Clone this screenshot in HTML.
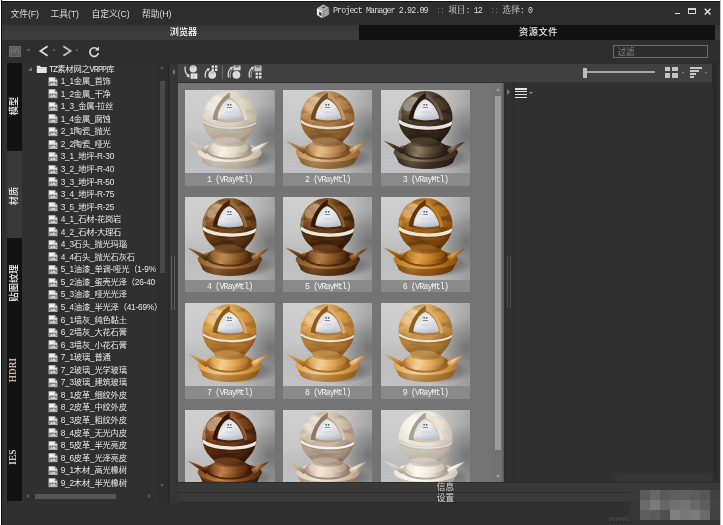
<!DOCTYPE html>
<html lang="zh-CN"><head><meta charset="utf-8"><title>Project Manager</title>
<style>
*{margin:0;padding:0;box-sizing:border-box}
html,body{width:723px;height:525px;overflow:hidden;background:#fff}
body{font-family:"Liberation Sans","Noto Sans CJK SC",sans-serif;color:#e6e6e6;position:relative}
#win{position:absolute;left:0;top:0;width:723px;height:525px;background:#303030;overflow:hidden;will-change:transform;opacity:.999}
#win:before{content:"";position:absolute;left:0;top:0;width:723px;height:1.5px;background:linear-gradient(#fff 0,#fff 1px,#111 1px);z-index:50}
#win:after{content:"";position:absolute;left:0;top:0;width:1.5px;height:525px;background:linear-gradient(90deg,#fff 0,#fff 1px,#111 1px);z-index:50}
#title{position:absolute;left:0;top:0;width:720.5px;height:24.8px;background:#2d2d2d}
.menu{position:absolute;top:8.2px;font-size:8.8px;line-height:13px;color:#dadada;white-space:nowrap;letter-spacing:-0.1px}
#logo{position:absolute;left:316px;top:4px;width:14px;height:15px}
#ttext{position:absolute;left:333px;top:5px;height:13px;line-height:13px;font-family:"Liberation Mono","Noto Serif CJK SC",monospace;font-size:8.4px;letter-spacing:-0.91px;color:#dcdcdc;white-space:pre}
#ttext .dim{color:#777}
#ttext .cj{font-size:8.6px;letter-spacing:0}
#wmin{position:absolute;left:674.8px;top:12.7px;width:5.7px;height:1.7px;background:#ddd}
#wmax{position:absolute;left:688.4px;top:7.7px;width:7.8px;height:6.7px;border:1.4px solid #d6d6d6;border-top-width:2px}
#wclose{position:absolute;left:703.5px;top:7.5px;width:7.2px;height:7.2px}
#tabs{position:absolute;left:0;top:24.8px;width:720.5px;height:15px;background:linear-gradient(#373737 0,#383838 40%,#3c3c3c 45%,#3c3c3c 100%)}
#tab1{position:absolute;left:0;top:0;width:359px;height:14.9px;text-align:center;font-size:9.2px;line-height:14.4px;color:#fff;font-weight:500;padding-left:8px}
#tab2{position:absolute;left:359px;top:0;width:356px;height:14.9px;background:#121212;text-align:center;font-size:9.2px;line-height:14.4px;color:#e8e8e8;font-weight:500;padding-left:3px;letter-spacing:0.6px}
#nav{position:absolute;left:0;top:39.8px;width:720.5px;height:24px;background:#2e2e2e}
#navico{position:absolute;left:9.2px;top:6.6px;width:12.2px;height:11px;background:#5a5a5a;border:1px solid #6a6a6a}
.dd{position:absolute;width:2.6px;height:1.2px;background:#585858}
.chev{position:absolute;top:5.3px;width:12px;height:12px}
#refresh{position:absolute;left:88.4px;top:6.6px;width:12px;height:12px}
#filter{position:absolute;left:613.4px;top:5.5px;width:94.6px;height:12.6px;border:1px solid #6c6c6c;background:#2c2c2c}
#filter span{position:absolute;left:3px;top:-0.6px;font-size:8.6px;line-height:12px;color:#8184a0}
#side{position:absolute;left:6.6px;top:63px;width:15.5px;height:437.5px;background:#111}
.vt{position:absolute;left:0;width:15.5px;height:87.5px;background:#121212}
.vt.act{background:#393939}
.vt span{position:absolute;left:7px;top:44.3px;transform:translate(-50%,-50%) rotate(-90deg);white-space:nowrap;font-size:9.2px;font-weight:700;color:#d6d6d6;line-height:12px}
.vt span.lat{font-family:"Liberation Serif",serif;font-size:9.3px;letter-spacing:0.1px;left:6.8px}
.vt span.pk{color:#cfb2a8}
#tree{position:absolute;left:22.1px;top:63px;width:147.4px;height:440.2px;background:#303030;overflow:hidden;border-right:1px solid #262626}
#tree .root{position:absolute;left:0;top:0.4px;height:13px}
.exp{position:absolute;left:6.2px;top:3.4px;width:0;height:0;border-left:4px solid transparent;border-bottom:4px solid #777}
.fold{position:absolute;left:14.4px;top:1.4px;width:11.6px;height:8.6px}
.rt{position:absolute;left:26.8px;top:-0.8px;font-size:8.3px;line-height:13px;white-space:nowrap;color:#e8e8e8;letter-spacing:-0.22px}
.ti{position:absolute;left:25.8px;height:12.4px;white-space:nowrap}
.ti .fi{position:absolute;left:0;top:1.4px;width:10px;height:9.6px}
.ti span{position:absolute;left:12.8px;top:-0.3px;font-size:8.3px;line-height:12.4px;color:#e8e8e8;letter-spacing:-0.22px}
#vsb{position:absolute;left:135.4px;top:0;width:12px;height:440px;background:#2e2e2e}
#vsb b{position:absolute;left:2.5px;top:18px;width:5px;height:192px;background:#4a4a4a}
i.up,i.dn,i.lf,i.rt2{position:absolute;width:0;height:0}
#vsb .up{left:2.6px;top:3.4px;border-left:2.5px solid transparent;border-right:2.5px solid transparent;border-bottom:3.2px solid #5c5c5c}
#vsb .dn{left:2.6px;top:420.8px;border-left:2.5px solid transparent;border-right:2.5px solid transparent;border-top:3.2px solid #5c5c5c}
#hsb{position:absolute;left:0;top:430px;width:136px;height:7px}
#hsb b{position:absolute;left:12.8px;top:0.6px;width:81.4px;height:5.6px;background:#555}
#hsb .lf{left:4.4px;top:1px;border-top:2.5px solid transparent;border-bottom:2.5px solid transparent;border-right:3.2px solid #5c5c5c}
#hsb .rt2{left:126px;top:1px;border-top:2.5px solid transparent;border-bottom:2.5px solid transparent;border-left:3.2px solid #5c5c5c}
#split1{position:absolute;left:169.5px;top:63.5px;width:8.3px;height:439.7px;background:#353535}
#split1 i{position:absolute;left:2px;top:5.5px;width:0;height:0;border-top:3px solid transparent;border-bottom:3px solid transparent;border-right:3.4px solid #777}
#tbar{position:absolute;left:177.8px;top:63.8px;width:534.4px;height:18.8px;background:#414141}
#tb1,#tb2,#tb3,#tb4{position:absolute;top:1.5px;width:14px;height:14px}
#tb1{left:6px}#tb2{left:26.2px}#tb3{left:49.5px}#tb4{left:70.5px}
.tsep{position:absolute;left:44.4px;top:2px;width:1px;height:13.5px;background:#686868}
#slider{position:absolute;left:405.7px;top:3.9px;width:72px;height:10px}
#slider b{position:absolute;left:0;top:0;width:3.8px;height:10px;background:#bdbdbd}
#slider i{position:absolute;left:3.8px;top:3.6px;width:68px;height:2.2px;background:#a8a8a8}
#gridico{position:absolute;left:487.3px;top:2.8px;width:12.6px;height:11.4px}
#gridico i{position:absolute;width:5.4px;height:4.9px;background:#c4c4c4}
#gridico i:nth-child(2){left:7.2px}#gridico i:nth-child(3){top:6.5px}#gridico i:nth-child(4){left:7.2px;top:6.5px}
.dd2{position:absolute;top:8px;width:0;height:0;border-left:1.8px solid transparent;border-right:1.8px solid transparent;border-top:2.2px solid #8a8a8a}
#sortico{position:absolute;left:512.1px;top:3.2px;width:12px;height:11px}
#sortico i{display:block;height:1.7px;background:#c8c8c8;margin-bottom:1.3px}
#thumbs{position:absolute;left:177.8px;top:82.3px;width:326.7px;height:399.7px;background:#747474;overflow:hidden;border-top:1px solid #303030}
.th{position:absolute;width:89.6px;height:95.6px;background:#8a8a8a;overflow:hidden}
.th svg{position:absolute;left:0;top:0;width:89.6px;height:83px;display:block}
.th .lb{position:absolute;left:0;top:83px;width:89.6px;height:12.6px;text-align:center;font-family:"Liberation Mono","Noto Serif CJK SC",monospace;font-size:8.3px;line-height:13.4px;letter-spacing:-0.85px;color:#f4f4f4;white-space:pre}
#tsb{position:absolute;left:314.2px;top:0;width:12.5px;height:400px;background:linear-gradient(90deg,#727272 0,#727272 78%,#555 100%)}
#tsb b{position:absolute;left:3.4px;top:12.6px;width:5.9px;height:354.5px;background:#9c9c9c}
#tsb .up{left:3.8px;top:4.5px;border-left:2.6px solid transparent;border-right:2.6px solid transparent;border-bottom:3.4px solid #9a9a9a}
#tsb .dn{left:3.8px;top:391.6px;border-left:2.6px solid transparent;border-right:2.6px solid transparent;border-top:3.4px solid #a4a4a4}
#split2{position:absolute;left:504.5px;top:82.3px;width:9.5px;height:399.7px;background:#303030;border-left:1.6px solid #2a2a2a;border-right:1px solid #292929}
#split2 i{position:absolute;left:1.6px;top:7.2px;width:0;height:0;border-top:3px solid transparent;border-bottom:3px solid transparent;border-left:3.4px solid #7a7a7a}
#right{position:absolute;left:514px;top:82.3px;width:202.6px;height:399.7px;background:#303030;border-right:4.4px solid #2a2a2a}
#ham{position:absolute;left:1.4px;top:5.6px;width:11.6px}
#ham i{display:block;height:1.7px;background:#e2e2e2;margin-bottom:1.2px}
.dd3{position:absolute;left:14.8px;top:10px;width:0;height:0;border-left:2.2px solid transparent;border-right:2.2px solid transparent;border-top:2.6px solid #8a8a8a}
.bar{position:absolute;left:177.5px;width:543px;height:10.2px;background:#393939;border-top:1px solid #2c2c2c}
#info{top:482px}
#sett{top:492.1px;border-bottom:1px solid #2a2a2a;height:10.8px}
.bar span{position:absolute;left:259.3px;top:-1.6px;font-size:8.6px;line-height:12px;color:#d8d8d8}
#mosaic i{position:absolute;width:10px;height:10px}
#halo{position:absolute;left:630px;top:486px;width:90px;height:37px;background:#3a3a3a;filter:blur(3px);opacity:.8}
#www{position:absolute;left:609px;top:513.5px;font-size:8px;color:#464646;font-weight:700;letter-spacing:0.2px}
#rstrip{position:absolute;left:720px;top:0;width:3px;height:525px;background:linear-gradient(90deg,#8a8a8a 0,#e8e8e8 0.8px,#fff 1.4px);z-index:60}

.rt .mn{font-family:"Liberation Mono",monospace;letter-spacing:-0.85px;font-size:8.4px}

.grip{position:absolute;top:256px;width:4.2px;height:54px;border-left:1px solid #5c5c5c;border-right:1px solid #5c5c5c}

#rband{position:absolute;left:712.2px;top:62px;width:4.4px;height:21px;background:#2a2a2a}
#smudge{position:absolute;left:614px;top:474px;width:100px;height:7px;background:#3e3e3e;opacity:.55;filter:blur(2px)}

</style></head><body>
<svg width="0" height="0" style="position:absolute">
<defs>
<linearGradient id="bgv" x1="0" y1="0" x2="0" y2="1"><stop offset="0" stop-color="#d0d0d0"/><stop offset="0.45" stop-color="#c8c8c8"/><stop offset="0.62" stop-color="#bebebe"/><stop offset="1" stop-color="#c2c2c4"/></linearGradient>
<linearGradient id="bgr" x1="0" y1="0" x2="1" y2="0"><stop offset="0" stop-color="#000" stop-opacity="0"/><stop offset="0.55" stop-color="#000" stop-opacity="0"/><stop offset="1" stop-color="#000" stop-opacity=".2"/></linearGradient>
<radialGradient id="shR" cx="0.5" cy="0.5" r="0.5"><stop offset="0" stop-color="#505050" stop-opacity=".75"/><stop offset="0.6" stop-color="#606060" stop-opacity=".4"/><stop offset="1" stop-color="#707070" stop-opacity="0"/></radialGradient>
<radialGradient id="shF" cx="0.5" cy="0.5" r="0.5"><stop offset="0" stop-color="#303030" stop-opacity=".7"/><stop offset="0.7" stop-color="#505050" stop-opacity=".35"/><stop offset="1" stop-color="#707070" stop-opacity="0"/></radialGradient>
<linearGradient id="dome" x1="0" y1="0" x2="1" y2="1"><stop offset="0" stop-color="#c4c8d0"/><stop offset="0.42" stop-color="#ececee"/><stop offset="1" stop-color="#b8c0cc"/></linearGradient>
<linearGradient id="domev" x1="0" y1="0" x2="0" y2="1"><stop offset="0" stop-color="#fff" stop-opacity=".25"/><stop offset="0.55" stop-color="#fff" stop-opacity="0"/><stop offset="1" stop-color="#8a98ac" stop-opacity=".45"/></linearGradient>
<pattern id="chk" width="7" height="4" patternUnits="userSpaceOnUse" patternTransform="skewX(-55)"><rect width="7" height="4" fill="none"/><path d="M0 0H7M0 0V4" stroke="#8e96a4" stroke-width=".4" opacity=".3"/></pattern>
<filter id="wood" x="0" y="0" width="1" height="1"><feTurbulence type="fractalNoise" baseFrequency="0.06 0.16" numOctaves="3" seed="7"/><feColorMatrix type="matrix" values="0 0 0 0 0  0 0 0 0 0  0 0 0 0 0  1.8 0 0 0 -0.7"/></filter>
<g id="bgfloor"><rect width="89.6" height="83" fill="url(#bgv)"/><rect y="44" width="89.6" height="39" fill="url(#chk)"/><rect width="89.6" height="83" fill="url(#bgr)"/><ellipse cx="85" cy="44" rx="27" ry="31" fill="url(#shR)" opacity=".72"/><ellipse cx="56" cy="68.5" rx="37" ry="12" fill="url(#shF)"/></g>
<symbol id="fileico" viewBox="0 0 10 10">
<path d="M0.3 0.3H7L9.7 3V9.7H0.3Z" fill="#d6d6d6"/>
<path d="M7 0.3V3H9.7Z" fill="#888"/>
<rect x="1.2" y="1.4" width="4.5" height="2.6" fill="#f4f4f4"/>
<rect x="1.2" y="5" width="7.6" height="3.8" fill="#777"/>
<path d="M1.8 8.2L3.4 6L4.6 7.4L6 5.6L8.2 8.2Z" fill="#e8e8e8"/>
</symbol>
</defs>
</svg>
<div id="win">
 <div id="title">
  <div class="menu" style="left:10.6px">文件(F)</div>
  <div class="menu" style="left:50.6px">工具(T)</div>
  <div class="menu" style="left:91.5px">自定义(C)</div>
  <div class="menu" style="left:142px">帮助(H)</div>
  <svg id="logo" viewBox="0 0 14 15"><polygon points="7.3,0.6 13.2,3.8 6.8,7.4 0.9,4.2" fill="#b4b4b4"/><polygon points="0.9,4.2 6.8,7.4 6.4,14.3 0.9,11.1" fill="#ededed"/><polygon points="6.8,7.4 13.2,3.8 13.2,10.6 6.4,14.3" fill="#8e8e8e"/><polygon points="3.2,7.6 5.6,8.9 5.5,12.2 3.2,10.9" fill="#383838"/><polygon points="5.4,3.5 8,2.3 10,3.4 7.5,4.7" fill="#5a5a5a"/><path d="M8.2 8.2L12.2 6M8.2 10.2L12.2 8M8.2 12.2L12.2 10" stroke="#c4c4c4" stroke-width=".7"/></svg>
  <div id="ttext">Project Manager 2.92.09<span class="dim">  :: </span><span class="cj">项目</span>: 12<span class="dim">  :: </span><span class="cj">选择</span>: 0</div>
  <div id="wmin"></div><div id="wmax"></div>
  <svg id="wclose" viewBox="0 0 8 8"><path d="M0.8 0.8L7.2 7.2M7.2 0.8L0.8 7.2" stroke="#e8e8e8" stroke-width="1.5" fill="none"/></svg>
 </div>
 <div id="tabs">
  <div id="tab1">浏览器</div>
  <div id="tab2">资源文件</div>
 </div>
 <div id="nav">
  <div id="navico"><svg viewBox="0 0 10 9" style="position:absolute;left:1.2px;top:0.8px;width:8px;height:7.4px"><path d="M1 8V1L5 6V1H9V8" stroke="#7c7c7c" stroke-width="1.2" fill="none"/></svg></div>
  <span class="dd" style="left:27px;top:9.6px"></span>
  <svg class="chev" style="left:37.5px" viewBox="0 0 10 10"><path d="M8 1L2 5L8 9" stroke="#dcdcdc" stroke-width="1.5" fill="none"/></svg>
  <span class="dd" style="left:52.8px;top:9.6px"></span>
  <svg class="chev" style="left:61px" viewBox="0 0 10 10"><path d="M2 1L8 5L2 9" stroke="#c2c2c2" stroke-width="1.5" fill="none"/></svg>
  <span class="dd" style="left:75.6px;top:9.6px"></span>
  <svg id="refresh" viewBox="0 0 12 12"><path d="M9.6 3.4A4.3 4.3 0 1 0 10.4 7" stroke="#d8d8d8" stroke-width="1.7" fill="none"/><path d="M11 0.6V4.6H7Z" fill="#d8d8d8"/></svg>
  <div id="filter"><span>过滤</span></div>
 </div>
 <div id="side">
  <div class="vt" style="top:0"><span style="top:43.2px">模型</span></div>
  <div class="vt act" style="top:87.5px"><span style="top:45.2px">材质</span></div>
  <div class="vt" style="top:175px"><span style="top:44.5px">贴图纹理</span></div>
  <div class="vt" style="top:262.5px"><span class="lat pk" style="top:44.6px">HDRI</span></div>
  <div class="vt" style="top:350px"><span class="lat" style="top:43.8px">IES</span></div>
 </div>
 <div id="tree">
  <div class="root"><span class="exp"></span><svg class="fold" viewBox="0 0 11 9"><path d="M0.3 8.7V0.9H3.6L4.6 2H10.7V8.7Z" fill="#e6e6e6"/><path d="M0.3 3.4H10.7" stroke="#bbb" stroke-width="0.6"/></svg><span class="rt"><span class="mn">TZ</span>素材网之<span class="mn">VRPP</span>库</span></div>
<div class="ti" style="top:12.40px"><svg class="fi" viewBox="0 0 10 10"><use href="#fileico"/></svg><span>1_1金属_首饰</span></div>
<div class="ti" style="top:24.95px"><svg class="fi" viewBox="0 0 10 10"><use href="#fileico"/></svg><span>1_2金属_干净</span></div>
<div class="ti" style="top:37.50px"><svg class="fi" viewBox="0 0 10 10"><use href="#fileico"/></svg><span>1_3_金属-拉丝</span></div>
<div class="ti" style="top:50.05px"><svg class="fi" viewBox="0 0 10 10"><use href="#fileico"/></svg><span>1_4金属_腐蚀</span></div>
<div class="ti" style="top:62.60px"><svg class="fi" viewBox="0 0 10 10"><use href="#fileico"/></svg><span>2_1陶瓷_抛光</span></div>
<div class="ti" style="top:75.15px"><svg class="fi" viewBox="0 0 10 10"><use href="#fileico"/></svg><span>2_2陶瓷_哑光</span></div>
<div class="ti" style="top:87.70px"><svg class="fi" viewBox="0 0 10 10"><use href="#fileico"/></svg><span>3_1_地坪-R-30</span></div>
<div class="ti" style="top:100.25px"><svg class="fi" viewBox="0 0 10 10"><use href="#fileico"/></svg><span>3_2_地坪-R-40</span></div>
<div class="ti" style="top:112.80px"><svg class="fi" viewBox="0 0 10 10"><use href="#fileico"/></svg><span>3_3_地坪-R-50</span></div>
<div class="ti" style="top:125.35px"><svg class="fi" viewBox="0 0 10 10"><use href="#fileico"/></svg><span>3_4_地坪-R-75</span></div>
<div class="ti" style="top:137.90px"><svg class="fi" viewBox="0 0 10 10"><use href="#fileico"/></svg><span>3_5_地坪-R-25</span></div>
<div class="ti" style="top:150.45px"><svg class="fi" viewBox="0 0 10 10"><use href="#fileico"/></svg><span>4_1_石材-花岗岩</span></div>
<div class="ti" style="top:163.00px"><svg class="fi" viewBox="0 0 10 10"><use href="#fileico"/></svg><span>4_2_石材-大理石</span></div>
<div class="ti" style="top:175.55px"><svg class="fi" viewBox="0 0 10 10"><use href="#fileico"/></svg><span>4_3石头_抛光玛瑙</span></div>
<div class="ti" style="top:188.10px"><svg class="fi" viewBox="0 0 10 10"><use href="#fileico"/></svg><span>4_4石头_抛光石灰石</span></div>
<div class="ti" style="top:200.65px"><svg class="fi" viewBox="0 0 10 10"><use href="#fileico"/></svg><span>5_1油漆_单调-哑光（1-9%</span></div>
<div class="ti" style="top:213.20px"><svg class="fi" viewBox="0 0 10 10"><use href="#fileico"/></svg><span>5_2油漆_蛋壳光泽（26-40</span></div>
<div class="ti" style="top:225.75px"><svg class="fi" viewBox="0 0 10 10"><use href="#fileico"/></svg><span>5_3油漆_哑光光泽</span></div>
<div class="ti" style="top:238.30px"><svg class="fi" viewBox="0 0 10 10"><use href="#fileico"/></svg><span>5_4油漆_半光泽（41-69%）</span></div>
<div class="ti" style="top:250.85px"><svg class="fi" viewBox="0 0 10 10"><use href="#fileico"/></svg><span>6_1墙灰_纯色黏土</span></div>
<div class="ti" style="top:263.40px"><svg class="fi" viewBox="0 0 10 10"><use href="#fileico"/></svg><span>6_2墙灰_大花石膏</span></div>
<div class="ti" style="top:275.95px"><svg class="fi" viewBox="0 0 10 10"><use href="#fileico"/></svg><span>6_3墙灰_小花石膏</span></div>
<div class="ti" style="top:288.50px"><svg class="fi" viewBox="0 0 10 10"><use href="#fileico"/></svg><span>7_1玻璃_普通</span></div>
<div class="ti" style="top:301.05px"><svg class="fi" viewBox="0 0 10 10"><use href="#fileico"/></svg><span>7_2玻璃_光学玻璃</span></div>
<div class="ti" style="top:313.60px"><svg class="fi" viewBox="0 0 10 10"><use href="#fileico"/></svg><span>7_3玻璃_建筑玻璃</span></div>
<div class="ti" style="top:326.15px"><svg class="fi" viewBox="0 0 10 10"><use href="#fileico"/></svg><span>8_1皮革_细纹外皮</span></div>
<div class="ti" style="top:338.70px"><svg class="fi" viewBox="0 0 10 10"><use href="#fileico"/></svg><span>8_2皮革_中纹外皮</span></div>
<div class="ti" style="top:351.25px"><svg class="fi" viewBox="0 0 10 10"><use href="#fileico"/></svg><span>8_3皮革_粗纹外皮</span></div>
<div class="ti" style="top:363.80px"><svg class="fi" viewBox="0 0 10 10"><use href="#fileico"/></svg><span>8_4皮革_无光内皮</span></div>
<div class="ti" style="top:376.35px"><svg class="fi" viewBox="0 0 10 10"><use href="#fileico"/></svg><span>8_5皮革_半光亮皮</span></div>
<div class="ti" style="top:388.90px"><svg class="fi" viewBox="0 0 10 10"><use href="#fileico"/></svg><span>8_6皮革_光泽亮皮</span></div>
<div class="ti" style="top:401.45px"><svg class="fi" viewBox="0 0 10 10"><use href="#fileico"/></svg><span>9_1木材_高光橡树</span></div>
<div class="ti" style="top:414.00px"><svg class="fi" viewBox="0 0 10 10"><use href="#fileico"/></svg><span>9_2木材_半光橡树</span></div>
  <div id="vsb"><i class="up"></i><b></b><i class="dn"></i></div>
  <div id="hsb"><i class="lf"></i><b></b><i class="rt2"></i></div>
 </div>
 <div id="split1"><i></i></div>
 <div id="tbar">
  <svg id="tb1" viewBox="0 0 14 14"><circle cx="9.2" cy="3.8" r="3.6" fill="#dcdcdc"/><path d="M7.2 2.8A2.4 2.4 0 0 1 11 2.6" stroke="#999" stroke-width="0.8" fill="none"/><rect x="6.6" y="8.4" width="6.8" height="5.4" fill="#e2e2e2"/><path d="M9.6 8.4V13.8" stroke="#aaa" stroke-width="0.7"/><path d="M1.2 1.5C0.6 6 1.8 9 4.4 11" stroke="#d8d8d8" stroke-width="1.3" fill="none"/><path d="M5.6 12.4L2.4 11.8L5 8.6Z" fill="#d8d8d8"/></svg>
  <svg id="tb2" viewBox="0 0 14 14"><circle cx="8.2" cy="9.8" r="3.9" fill="#dcdcdc"/><path d="M6 9A2.6 2.6 0 0 1 10.4 8.6" stroke="#999" stroke-width="0.8" fill="none"/><g fill="#dedede"><rect x="7.6" y="0.4" width="2.4" height="2.4"/><rect x="11" y="0.4" width="2.4" height="2.4"/><rect x="7.6" y="3.6" width="2.4" height="2.4"/><rect x="11" y="3.6" width="2.4" height="2.4"/></g><path d="M1.6 12.6C0.6 9 1.6 6 4 4.2" stroke="#d8d8d8" stroke-width="1.3" fill="none"/><path d="M5.8 3L2.6 3.4L4.8 6.4Z" fill="#d8d8d8"/></svg>
  <div class="tsep"></div>
  <svg id="tb3" viewBox="0 0 14 14"><circle cx="9.4" cy="9.8" r="3.9" fill="#dcdcdc"/><path d="M6.4 0.6H13.6V5.4H6.4Z" fill="#d2d2d2"/><rect x="8" y="0.6" width="4" height="1.8" fill="#777"/><path d="M1.6 12.6C0.6 8.4 1.6 5 4.4 3" stroke="#d8d8d8" stroke-width="1.3" fill="none"/><path d="M3.4 12.6C2.6 9 3.4 6.4 5.4 5" stroke="#bbb" stroke-width="0.9" fill="none"/><path d="M6 1.6L2.6 2.2L5 5.2Z" fill="#d8d8d8"/></svg>
  <svg id="tb4" viewBox="0 0 14 14"><path d="M6.4 0.6H13.6V6.4H6.4Z" fill="#bdbdbd"/><rect x="8" y="0.6" width="4" height="2" fill="#777"/><g fill="#dedede"><rect x="7.6" y="7.6" width="2.5" height="2.5"/><rect x="11" y="7.6" width="2.5" height="2.5"/><rect x="7.6" y="11" width="2.5" height="2.5"/><rect x="11" y="11" width="2.5" height="2.5"/></g><path d="M1.6 12.6C0.6 8.4 1.6 5 4.4 3" stroke="#d8d8d8" stroke-width="1.3" fill="none"/><path d="M3.4 12.6C2.6 9 3.4 6.4 5.4 5" stroke="#bbb" stroke-width="0.9" fill="none"/><path d="M6 1.6L2.6 2.2L5 5.2Z" fill="#d8d8d8"/></svg>
  <div id="slider"><b></b><i></i></div>
  <div id="gridico"><i></i><i></i><i></i><i></i></div>
  <span class="dd2" style="left:504.5px"></span>
  <div id="sortico"><i style="width:11.8px"></i><i style="width:9px"></i><i style="width:6.4px"></i><i style="width:3.8px"></i></div>
  <span class="dd2" style="left:527px"></span>
 </div>
 <div id="thumbs">
<div class="th" style="left:7.2px;top:6.9px"><svg viewBox="0 0 89.6 83" preserveAspectRatio="none">
<defs>
<radialGradient id="b0s" cx="0.38" cy="0.32" r="0.74" fx="0.32" fy="0.22"><stop offset="0" stop-color="#f6f0e6"/><stop offset="0.5" stop-color="#e3dacc"/><stop offset="0.88" stop-color="#c2b4a0"/><stop offset="1" stop-color="#968774"/></radialGradient>
<linearGradient id="b0h" x1="0" y1="0" x2="1" y2="0"><stop offset="0" stop-color="#c2b4a0"/><stop offset="0.28" stop-color="#f6f0e6"/><stop offset="0.6" stop-color="#e3dacc"/><stop offset="1" stop-color="#968774"/></linearGradient>
<linearGradient id="b0h2" x1="0" y1="0" x2="1" y2="0"><stop offset="0" stop-color="#e3dacc"/><stop offset="0.35" stop-color="#f6f0e6"/><stop offset="0.7" stop-color="#e3dacc"/><stop offset="1" stop-color="#c2b4a0"/></linearGradient>
<linearGradient id="b0v" x1="0" y1="0" x2="0" y2="1"><stop offset="0" stop-color="#968774" stop-opacity=".0"/><stop offset="1" stop-color="#968774" stop-opacity=".6"/></linearGradient>
<linearGradient id="b0sp" x1="0" y1="0" x2="0" y2="1"><stop offset="0" stop-color="#f6f0e6"/><stop offset="0.5" stop-color="#e3dacc"/><stop offset="1" stop-color="#968774"/></linearGradient>
<clipPath id="b0c"><circle cx="44.5" cy="27.9" r="27"/></clipPath>
</defs>
<use href="#bgfloor"/>
<!-- outer base -->
<path d="M12.8 62.5A32 9.5 0 0 1 76.8 62.5L72.6 70.6A27.8 8.4 0 0 1 17 70.6Z" fill="url(#b0h)"/>
<path d="M12.8 62.5A32 9.5 0 0 1 76.8 62.5L72.6 70.6A27.8 8.4 0 0 1 17 70.6Z" fill="url(#b0v)"/>
<ellipse cx="44.8" cy="62.5" rx="32" ry="9.5" fill="url(#b0h2)"/>
<ellipse cx="44.7" cy="60.6" rx="23.8" ry="9" fill="#968774" opacity=".75"/>
<!-- spikes -->
<path d="M2.6 50.4C9 52.8 16 55.8 23.5 59.6L21 64C14.6 59.6 8.4 55 2.6 50.4Z" fill="url(#b0sp)"/>
<path d="M2.6 50.4C9 52.8 16 55.8 23.5 59.6L21 64C14.6 59.6 8.4 55 2.6 50.4Z" fill="#968774" opacity=".3"/>
<path d="M84 51.4C78 53.2 72 55.8 65.5 59.4L69 63.8C74.6 59.6 79.6 55.4 84 51.4Z" fill="url(#b0h2)"/>
<path d="M84 51.4C79.6 55.4 74.6 59.6 69 63.8L67.4 61.8C73 58.2 79 54.8 84 51.4Z" fill="#968774" opacity=".3"/>
<!-- inner dome -->
<ellipse cx="44.6" cy="59" rx="21.9" ry="8.7" fill="url(#b0h)"/>
<ellipse cx="44.6" cy="57.4" rx="19" ry="6.6" fill="url(#b0h2)" opacity=".8"/>
<!-- neck -->
<path d="M22 40C25 47 30 50 30.2 53.4C32 57.8 58 57.8 59.8 53.4C60 50 65 47 68 40Z" fill="url(#b0h)"/>
<path d="M22 40C25 47 30 50 30.2 53.4C32 57.8 58 57.8 59.8 53.4C60 50 65 47 68 40Z" fill="#968774" opacity=".4"/>
<!-- sphere -->
<circle cx="44.5" cy="27.9" r="27" fill="url(#b0s)"/>
<g clip-path="url(#b0c)">
<rect x="15" y="0" width="60" height="58" fill="#000" filter="url(#wood)" opacity="0.1"/>
<path d="M17 31C30 43 60 43 72 32L72 60L17 60Z" fill="#968774" opacity=".3"/>
<ellipse cx="42" cy="52" rx="15" ry="4.5" fill="#f6f0e6" opacity=".3"/>
<ellipse cx="30" cy="14" rx="9" ry="6" fill="#fff" opacity="0.17" transform="rotate(-38 30 14)"/>
<path d="M24 8C20 14 18.6 22 19.6 30" stroke="#fff" stroke-width="2.2" fill="none" opacity="0.00" stroke-linecap="round"/>
<!-- band -->
<path d="M17.2 30.6C28 40.6 61 41.2 71.8 32.4" stroke="#968774" stroke-width="3.6" fill="none" opacity=".35"/>
<path d="M17.2 30.8C28 39.8 61 40.4 71.8 32.6" stroke="#d8e0e4" stroke-width="1.6" fill="none"/>
<!-- cutout -->
<path d="M44.8 2.6C37 7 29.6 17 27.6 29.4C38 33.4 52 33.6 62.4 29.8C61 18 52 7 44.8 2.6Z" fill="#c2b4a0"/>
<path d="M44.8 2.6C37 7 29.6 17 27.6 29.4L33 30.4C34 20 39 11 44.8 7.6Z" fill="#968774" opacity=".8"/>
<path d="M44.8 2.6C52 7 61 18 62.4 29.8L59.4 30.4C58 20 51.6 11 44.8 7.6Z" fill="#f6f0e6" opacity=".6"/>
</g>
<path d="M32.4 28.2C33.2 19.4 38.4 10.4 44.2 9.2C50.2 10.8 56.8 19.4 58.3 28.6C50.4 31 40 30.8 32.4 28.2Z" fill="url(#dome)"/><path d="M32.4 28.2C33.2 19.4 38.4 10.4 44.2 9.2C50.2 10.8 56.8 19.4 58.3 28.6C50.4 31 40 30.8 32.4 28.2Z" fill="url(#domev)"/>
<rect x="42.4" y="14" width="1.5" height="1.6" fill="#3a3a44" opacity=".8"/><rect x="44.9" y="14" width="1.5" height="1.6" fill="#3a3a44" opacity=".8"/>
<rect x="41.8" y="17" width="5.2" height="1" fill="#5a6068" opacity=".7"/>
<rect x="40" y="21.6" width="9" height="0.9" fill="#a8c4dc" opacity=".6"/>
</svg><div class="lb">1 (VRayMtl)</div></div>
<div class="th" style="left:105.0px;top:6.9px"><svg viewBox="0 0 89.6 83" preserveAspectRatio="none">
<defs>
<radialGradient id="b1s" cx="0.38" cy="0.32" r="0.74" fx="0.32" fy="0.22"><stop offset="0" stop-color="#e4be8c"/><stop offset="0.5" stop-color="#c08e56"/><stop offset="0.88" stop-color="#946430"/><stop offset="1" stop-color="#66421c"/></radialGradient>
<linearGradient id="b1h" x1="0" y1="0" x2="1" y2="0"><stop offset="0" stop-color="#946430"/><stop offset="0.28" stop-color="#e4be8c"/><stop offset="0.6" stop-color="#c08e56"/><stop offset="1" stop-color="#66421c"/></linearGradient>
<linearGradient id="b1h2" x1="0" y1="0" x2="1" y2="0"><stop offset="0" stop-color="#c08e56"/><stop offset="0.35" stop-color="#e4be8c"/><stop offset="0.7" stop-color="#c08e56"/><stop offset="1" stop-color="#946430"/></linearGradient>
<linearGradient id="b1v" x1="0" y1="0" x2="0" y2="1"><stop offset="0" stop-color="#66421c" stop-opacity=".0"/><stop offset="1" stop-color="#66421c" stop-opacity=".6"/></linearGradient>
<linearGradient id="b1sp" x1="0" y1="0" x2="0" y2="1"><stop offset="0" stop-color="#e4be8c"/><stop offset="0.5" stop-color="#c08e56"/><stop offset="1" stop-color="#66421c"/></linearGradient>
<clipPath id="b1c"><circle cx="44.5" cy="27.9" r="27"/></clipPath>
</defs>
<use href="#bgfloor"/>
<!-- outer base -->
<path d="M12.8 62.5A32 9.5 0 0 1 76.8 62.5L72.6 70.6A27.8 8.4 0 0 1 17 70.6Z" fill="url(#b1h)"/>
<path d="M12.8 62.5A32 9.5 0 0 1 76.8 62.5L72.6 70.6A27.8 8.4 0 0 1 17 70.6Z" fill="url(#b1v)"/>
<ellipse cx="44.8" cy="62.5" rx="32" ry="9.5" fill="url(#b1h2)"/>
<ellipse cx="44.7" cy="60.6" rx="23.8" ry="9" fill="#66421c" opacity=".75"/>
<!-- spikes -->
<path d="M2.6 50.4C9 52.8 16 55.8 23.5 59.6L21 64C14.6 59.6 8.4 55 2.6 50.4Z" fill="url(#b1sp)"/>
<path d="M2.6 50.4C9 52.8 16 55.8 23.5 59.6L21 64C14.6 59.6 8.4 55 2.6 50.4Z" fill="#66421c" opacity=".3"/>
<path d="M84 51.4C78 53.2 72 55.8 65.5 59.4L69 63.8C74.6 59.6 79.6 55.4 84 51.4Z" fill="url(#b1h2)"/>
<path d="M84 51.4C79.6 55.4 74.6 59.6 69 63.8L67.4 61.8C73 58.2 79 54.8 84 51.4Z" fill="#66421c" opacity=".3"/>
<!-- inner dome -->
<ellipse cx="44.6" cy="59" rx="21.9" ry="8.7" fill="url(#b1h)"/>
<ellipse cx="44.6" cy="57.4" rx="19" ry="6.6" fill="url(#b1h2)" opacity=".8"/>
<!-- neck -->
<path d="M22 40C25 47 30 50 30.2 53.4C32 57.8 58 57.8 59.8 53.4C60 50 65 47 68 40Z" fill="url(#b1h)"/>
<path d="M22 40C25 47 30 50 30.2 53.4C32 57.8 58 57.8 59.8 53.4C60 50 65 47 68 40Z" fill="#66421c" opacity=".4"/>
<!-- sphere -->
<circle cx="44.5" cy="27.9" r="27" fill="url(#b1s)"/>
<g clip-path="url(#b1c)">
<rect x="15" y="0" width="60" height="58" fill="#000" filter="url(#wood)" opacity="0.38"/>
<path d="M17 31C30 43 60 43 72 32L72 60L17 60Z" fill="#66421c" opacity=".3"/>
<ellipse cx="42" cy="52" rx="15" ry="4.5" fill="#e4be8c" opacity=".3"/>
<ellipse cx="30" cy="14" rx="9" ry="6" fill="#fff" opacity="0.17" transform="rotate(-38 30 14)"/>
<path d="M24 8C20 14 18.6 22 19.6 30" stroke="#fff" stroke-width="2.2" fill="none" opacity="0.00" stroke-linecap="round"/>
<!-- band -->
<path d="M17.2 30.6C28 40.6 61 41.2 71.8 32.4" stroke="#66421c" stroke-width="4.6" fill="none" opacity=".35"/>
<path d="M17.2 30.8C28 39.8 61 40.4 71.8 32.6" stroke="#ead8c4" stroke-width="2.6" fill="none"/>
<!-- cutout -->
<path d="M44.8 2.6C37 7 29.6 17 27.6 29.4C38 33.4 52 33.6 62.4 29.8C61 18 52 7 44.8 2.6Z" fill="#946430"/>
<path d="M44.8 2.6C37 7 29.6 17 27.6 29.4L33 30.4C34 20 39 11 44.8 7.6Z" fill="#66421c" opacity=".8"/>
<path d="M44.8 2.6C52 7 61 18 62.4 29.8L59.4 30.4C58 20 51.6 11 44.8 7.6Z" fill="#e4be8c" opacity=".6"/>
</g>
<path d="M32.4 28.2C33.2 19.4 38.4 10.4 44.2 9.2C50.2 10.8 56.8 19.4 58.3 28.6C50.4 31 40 30.8 32.4 28.2Z" fill="url(#dome)"/><path d="M32.4 28.2C33.2 19.4 38.4 10.4 44.2 9.2C50.2 10.8 56.8 19.4 58.3 28.6C50.4 31 40 30.8 32.4 28.2Z" fill="url(#domev)"/>
<rect x="42.4" y="14" width="1.5" height="1.6" fill="#3a3a44" opacity=".8"/><rect x="44.9" y="14" width="1.5" height="1.6" fill="#3a3a44" opacity=".8"/>
<rect x="41.8" y="17" width="5.2" height="1" fill="#5a6068" opacity=".7"/>
<rect x="40" y="21.6" width="9" height="0.9" fill="#a8c4dc" opacity=".6"/>
</svg><div class="lb">2 (VRayMtl)</div></div>
<div class="th" style="left:202.8px;top:6.9px"><svg viewBox="0 0 89.6 83" preserveAspectRatio="none">
<defs>
<radialGradient id="b2s" cx="0.38" cy="0.32" r="0.74" fx="0.32" fy="0.22"><stop offset="0" stop-color="#8e7c66"/><stop offset="0.5" stop-color="#54422e"/><stop offset="0.88" stop-color="#33261a"/><stop offset="1" stop-color="#1e160e"/></radialGradient>
<linearGradient id="b2h" x1="0" y1="0" x2="1" y2="0"><stop offset="0" stop-color="#33261a"/><stop offset="0.28" stop-color="#8e7c66"/><stop offset="0.6" stop-color="#54422e"/><stop offset="1" stop-color="#1e160e"/></linearGradient>
<linearGradient id="b2h2" x1="0" y1="0" x2="1" y2="0"><stop offset="0" stop-color="#54422e"/><stop offset="0.35" stop-color="#8e7c66"/><stop offset="0.7" stop-color="#54422e"/><stop offset="1" stop-color="#33261a"/></linearGradient>
<linearGradient id="b2v" x1="0" y1="0" x2="0" y2="1"><stop offset="0" stop-color="#1e160e" stop-opacity=".0"/><stop offset="1" stop-color="#1e160e" stop-opacity=".6"/></linearGradient>
<linearGradient id="b2sp" x1="0" y1="0" x2="0" y2="1"><stop offset="0" stop-color="#8e7c66"/><stop offset="0.5" stop-color="#54422e"/><stop offset="1" stop-color="#1e160e"/></linearGradient>
<clipPath id="b2c"><circle cx="44.5" cy="27.9" r="27"/></clipPath>
</defs>
<use href="#bgfloor"/>
<!-- outer base -->
<path d="M12.8 62.5A32 9.5 0 0 1 76.8 62.5L72.6 70.6A27.8 8.4 0 0 1 17 70.6Z" fill="url(#b2h)"/>
<path d="M12.8 62.5A32 9.5 0 0 1 76.8 62.5L72.6 70.6A27.8 8.4 0 0 1 17 70.6Z" fill="url(#b2v)"/>
<ellipse cx="44.8" cy="62.5" rx="32" ry="9.5" fill="url(#b2h2)"/>
<ellipse cx="44.7" cy="60.6" rx="23.8" ry="9" fill="#1e160e" opacity=".75"/>
<!-- spikes -->
<path d="M2.6 50.4C9 52.8 16 55.8 23.5 59.6L21 64C14.6 59.6 8.4 55 2.6 50.4Z" fill="url(#b2sp)"/>
<path d="M2.6 50.4C9 52.8 16 55.8 23.5 59.6L21 64C14.6 59.6 8.4 55 2.6 50.4Z" fill="#1e160e" opacity=".3"/>
<path d="M84 51.4C78 53.2 72 55.8 65.5 59.4L69 63.8C74.6 59.6 79.6 55.4 84 51.4Z" fill="url(#b2h2)"/>
<path d="M84 51.4C79.6 55.4 74.6 59.6 69 63.8L67.4 61.8C73 58.2 79 54.8 84 51.4Z" fill="#1e160e" opacity=".3"/>
<!-- inner dome -->
<ellipse cx="44.6" cy="59" rx="21.9" ry="8.7" fill="url(#b2h)"/>
<ellipse cx="44.6" cy="57.4" rx="19" ry="6.6" fill="url(#b2h2)" opacity=".8"/>
<!-- neck -->
<path d="M22 40C25 47 30 50 30.2 53.4C32 57.8 58 57.8 59.8 53.4C60 50 65 47 68 40Z" fill="url(#b2h)"/>
<path d="M22 40C25 47 30 50 30.2 53.4C32 57.8 58 57.8 59.8 53.4C60 50 65 47 68 40Z" fill="#1e160e" opacity=".4"/>
<!-- sphere -->
<circle cx="44.5" cy="27.9" r="27" fill="url(#b2s)"/>
<g clip-path="url(#b2c)">
<rect x="15" y="0" width="60" height="58" fill="#000" filter="url(#wood)" opacity="0.5"/>
<path d="M17 31C30 43 60 43 72 32L72 60L17 60Z" fill="#1e160e" opacity=".3"/>
<ellipse cx="42" cy="52" rx="15" ry="4.5" fill="#8e7c66" opacity=".3"/>
<ellipse cx="30" cy="14" rx="9" ry="6" fill="#fff" opacity="0.30" transform="rotate(-38 30 14)"/>
<path d="M24 8C20 14 18.6 22 19.6 30" stroke="#fff" stroke-width="2.2" fill="none" opacity="0.28" stroke-linecap="round"/>
<!-- band -->
<path d="M17.2 30.6C28 40.6 61 41.2 71.8 32.4" stroke="#1e160e" stroke-width="5.3" fill="none" opacity=".35"/>
<path d="M17.2 30.8C28 39.8 61 40.4 71.8 32.6" stroke="#e6e2dc" stroke-width="3.3" fill="none"/>
<!-- cutout -->
<path d="M44.8 2.6C37 7 29.6 17 27.6 29.4C38 33.4 52 33.6 62.4 29.8C61 18 52 7 44.8 2.6Z" fill="#33261a"/>
<path d="M44.8 2.6C37 7 29.6 17 27.6 29.4L33 30.4C34 20 39 11 44.8 7.6Z" fill="#1e160e" opacity=".8"/>
<path d="M44.8 2.6C52 7 61 18 62.4 29.8L59.4 30.4C58 20 51.6 11 44.8 7.6Z" fill="#8e7c66" opacity=".6"/>
</g>
<path d="M32.4 28.2C33.2 19.4 38.4 10.4 44.2 9.2C50.2 10.8 56.8 19.4 58.3 28.6C50.4 31 40 30.8 32.4 28.2Z" fill="url(#dome)"/><path d="M32.4 28.2C33.2 19.4 38.4 10.4 44.2 9.2C50.2 10.8 56.8 19.4 58.3 28.6C50.4 31 40 30.8 32.4 28.2Z" fill="url(#domev)"/>
<rect x="42.4" y="14" width="1.5" height="1.6" fill="#3a3a44" opacity=".8"/><rect x="44.9" y="14" width="1.5" height="1.6" fill="#3a3a44" opacity=".8"/>
<rect x="41.8" y="17" width="5.2" height="1" fill="#5a6068" opacity=".7"/>
<rect x="40" y="21.6" width="9" height="0.9" fill="#a8c4dc" opacity=".6"/>
</svg><div class="lb">3 (VRayMtl)</div></div>
<div class="th" style="left:7.2px;top:113.5px"><svg viewBox="0 0 89.6 83" preserveAspectRatio="none">
<defs>
<radialGradient id="b3s" cx="0.38" cy="0.32" r="0.74" fx="0.32" fy="0.22"><stop offset="0" stop-color="#c08e52"/><stop offset="0.5" stop-color="#8e5c28"/><stop offset="0.88" stop-color="#5e3610"/><stop offset="1" stop-color="#3a1e08"/></radialGradient>
<linearGradient id="b3h" x1="0" y1="0" x2="1" y2="0"><stop offset="0" stop-color="#5e3610"/><stop offset="0.28" stop-color="#c08e52"/><stop offset="0.6" stop-color="#8e5c28"/><stop offset="1" stop-color="#3a1e08"/></linearGradient>
<linearGradient id="b3h2" x1="0" y1="0" x2="1" y2="0"><stop offset="0" stop-color="#8e5c28"/><stop offset="0.35" stop-color="#c08e52"/><stop offset="0.7" stop-color="#8e5c28"/><stop offset="1" stop-color="#5e3610"/></linearGradient>
<linearGradient id="b3v" x1="0" y1="0" x2="0" y2="1"><stop offset="0" stop-color="#3a1e08" stop-opacity=".0"/><stop offset="1" stop-color="#3a1e08" stop-opacity=".6"/></linearGradient>
<linearGradient id="b3sp" x1="0" y1="0" x2="0" y2="1"><stop offset="0" stop-color="#c08e52"/><stop offset="0.5" stop-color="#8e5c28"/><stop offset="1" stop-color="#3a1e08"/></linearGradient>
<clipPath id="b3c"><circle cx="44.5" cy="27.9" r="27"/></clipPath>
</defs>
<use href="#bgfloor"/>
<!-- outer base -->
<path d="M12.8 62.5A32 9.5 0 0 1 76.8 62.5L72.6 70.6A27.8 8.4 0 0 1 17 70.6Z" fill="url(#b3h)"/>
<path d="M12.8 62.5A32 9.5 0 0 1 76.8 62.5L72.6 70.6A27.8 8.4 0 0 1 17 70.6Z" fill="url(#b3v)"/>
<ellipse cx="44.8" cy="62.5" rx="32" ry="9.5" fill="url(#b3h2)"/>
<ellipse cx="44.7" cy="60.6" rx="23.8" ry="9" fill="#3a1e08" opacity=".75"/>
<!-- spikes -->
<path d="M2.6 50.4C9 52.8 16 55.8 23.5 59.6L21 64C14.6 59.6 8.4 55 2.6 50.4Z" fill="url(#b3sp)"/>
<path d="M2.6 50.4C9 52.8 16 55.8 23.5 59.6L21 64C14.6 59.6 8.4 55 2.6 50.4Z" fill="#3a1e08" opacity=".3"/>
<path d="M84 51.4C78 53.2 72 55.8 65.5 59.4L69 63.8C74.6 59.6 79.6 55.4 84 51.4Z" fill="url(#b3h2)"/>
<path d="M84 51.4C79.6 55.4 74.6 59.6 69 63.8L67.4 61.8C73 58.2 79 54.8 84 51.4Z" fill="#3a1e08" opacity=".3"/>
<!-- inner dome -->
<ellipse cx="44.6" cy="59" rx="21.9" ry="8.7" fill="url(#b3h)"/>
<ellipse cx="44.6" cy="57.4" rx="19" ry="6.6" fill="url(#b3h2)" opacity=".8"/>
<!-- neck -->
<path d="M22 40C25 47 30 50 30.2 53.4C32 57.8 58 57.8 59.8 53.4C60 50 65 47 68 40Z" fill="url(#b3h)"/>
<path d="M22 40C25 47 30 50 30.2 53.4C32 57.8 58 57.8 59.8 53.4C60 50 65 47 68 40Z" fill="#3a1e08" opacity=".4"/>
<!-- sphere -->
<circle cx="44.5" cy="27.9" r="27" fill="url(#b3s)"/>
<g clip-path="url(#b3c)">
<rect x="15" y="0" width="60" height="58" fill="#000" filter="url(#wood)" opacity="0.6"/>
<path d="M17 31C30 43 60 43 72 32L72 60L17 60Z" fill="#3a1e08" opacity=".3"/>
<ellipse cx="42" cy="52" rx="15" ry="4.5" fill="#c08e52" opacity=".3"/>
<ellipse cx="30" cy="14" rx="9" ry="6" fill="#fff" opacity="0.28" transform="rotate(-38 30 14)"/>
<path d="M24 8C20 14 18.6 22 19.6 30" stroke="#fff" stroke-width="2.2" fill="none" opacity="0.22" stroke-linecap="round"/>
<!-- band -->
<path d="M17.2 30.6C28 40.6 61 41.2 71.8 32.4" stroke="#3a1e08" stroke-width="5.3" fill="none" opacity=".35"/>
<path d="M17.2 30.8C28 39.8 61 40.4 71.8 32.6" stroke="#efe6da" stroke-width="3.3" fill="none"/>
<!-- cutout -->
<path d="M44.8 2.6C37 7 29.6 17 27.6 29.4C38 33.4 52 33.6 62.4 29.8C61 18 52 7 44.8 2.6Z" fill="#5e3610"/>
<path d="M44.8 2.6C37 7 29.6 17 27.6 29.4L33 30.4C34 20 39 11 44.8 7.6Z" fill="#3a1e08" opacity=".8"/>
<path d="M44.8 2.6C52 7 61 18 62.4 29.8L59.4 30.4C58 20 51.6 11 44.8 7.6Z" fill="#c08e52" opacity=".6"/>
</g>
<path d="M32.4 28.2C33.2 19.4 38.4 10.4 44.2 9.2C50.2 10.8 56.8 19.4 58.3 28.6C50.4 31 40 30.8 32.4 28.2Z" fill="url(#dome)"/><path d="M32.4 28.2C33.2 19.4 38.4 10.4 44.2 9.2C50.2 10.8 56.8 19.4 58.3 28.6C50.4 31 40 30.8 32.4 28.2Z" fill="url(#domev)"/>
<rect x="42.4" y="14" width="1.5" height="1.6" fill="#3a3a44" opacity=".8"/><rect x="44.9" y="14" width="1.5" height="1.6" fill="#3a3a44" opacity=".8"/>
<rect x="41.8" y="17" width="5.2" height="1" fill="#5a6068" opacity=".7"/>
<rect x="40" y="21.6" width="9" height="0.9" fill="#a8c4dc" opacity=".6"/>
</svg><div class="lb">4 (VRayMtl)</div></div>
<div class="th" style="left:105.0px;top:113.5px"><svg viewBox="0 0 89.6 83" preserveAspectRatio="none">
<defs>
<radialGradient id="b4s" cx="0.38" cy="0.32" r="0.74" fx="0.32" fy="0.22"><stop offset="0" stop-color="#b67e48"/><stop offset="0.5" stop-color="#80501f"/><stop offset="0.88" stop-color="#4c280c"/><stop offset="1" stop-color="#2e1606"/></radialGradient>
<linearGradient id="b4h" x1="0" y1="0" x2="1" y2="0"><stop offset="0" stop-color="#4c280c"/><stop offset="0.28" stop-color="#b67e48"/><stop offset="0.6" stop-color="#80501f"/><stop offset="1" stop-color="#2e1606"/></linearGradient>
<linearGradient id="b4h2" x1="0" y1="0" x2="1" y2="0"><stop offset="0" stop-color="#80501f"/><stop offset="0.35" stop-color="#b67e48"/><stop offset="0.7" stop-color="#80501f"/><stop offset="1" stop-color="#4c280c"/></linearGradient>
<linearGradient id="b4v" x1="0" y1="0" x2="0" y2="1"><stop offset="0" stop-color="#2e1606" stop-opacity=".0"/><stop offset="1" stop-color="#2e1606" stop-opacity=".6"/></linearGradient>
<linearGradient id="b4sp" x1="0" y1="0" x2="0" y2="1"><stop offset="0" stop-color="#b67e48"/><stop offset="0.5" stop-color="#80501f"/><stop offset="1" stop-color="#2e1606"/></linearGradient>
<clipPath id="b4c"><circle cx="44.5" cy="27.9" r="27"/></clipPath>
</defs>
<use href="#bgfloor"/>
<!-- outer base -->
<path d="M12.8 62.5A32 9.5 0 0 1 76.8 62.5L72.6 70.6A27.8 8.4 0 0 1 17 70.6Z" fill="url(#b4h)"/>
<path d="M12.8 62.5A32 9.5 0 0 1 76.8 62.5L72.6 70.6A27.8 8.4 0 0 1 17 70.6Z" fill="url(#b4v)"/>
<ellipse cx="44.8" cy="62.5" rx="32" ry="9.5" fill="url(#b4h2)"/>
<ellipse cx="44.7" cy="60.6" rx="23.8" ry="9" fill="#2e1606" opacity=".75"/>
<!-- spikes -->
<path d="M2.6 50.4C9 52.8 16 55.8 23.5 59.6L21 64C14.6 59.6 8.4 55 2.6 50.4Z" fill="url(#b4sp)"/>
<path d="M2.6 50.4C9 52.8 16 55.8 23.5 59.6L21 64C14.6 59.6 8.4 55 2.6 50.4Z" fill="#2e1606" opacity=".3"/>
<path d="M84 51.4C78 53.2 72 55.8 65.5 59.4L69 63.8C74.6 59.6 79.6 55.4 84 51.4Z" fill="url(#b4h2)"/>
<path d="M84 51.4C79.6 55.4 74.6 59.6 69 63.8L67.4 61.8C73 58.2 79 54.8 84 51.4Z" fill="#2e1606" opacity=".3"/>
<!-- inner dome -->
<ellipse cx="44.6" cy="59" rx="21.9" ry="8.7" fill="url(#b4h)"/>
<ellipse cx="44.6" cy="57.4" rx="19" ry="6.6" fill="url(#b4h2)" opacity=".8"/>
<!-- neck -->
<path d="M22 40C25 47 30 50 30.2 53.4C32 57.8 58 57.8 59.8 53.4C60 50 65 47 68 40Z" fill="url(#b4h)"/>
<path d="M22 40C25 47 30 50 30.2 53.4C32 57.8 58 57.8 59.8 53.4C60 50 65 47 68 40Z" fill="#2e1606" opacity=".4"/>
<!-- sphere -->
<circle cx="44.5" cy="27.9" r="27" fill="url(#b4s)"/>
<g clip-path="url(#b4c)">
<rect x="15" y="0" width="60" height="58" fill="#000" filter="url(#wood)" opacity="0.6"/>
<path d="M17 31C30 43 60 43 72 32L72 60L17 60Z" fill="#2e1606" opacity=".3"/>
<ellipse cx="42" cy="52" rx="15" ry="4.5" fill="#b67e48" opacity=".3"/>
<ellipse cx="30" cy="14" rx="9" ry="6" fill="#fff" opacity="0.28" transform="rotate(-38 30 14)"/>
<path d="M24 8C20 14 18.6 22 19.6 30" stroke="#fff" stroke-width="2.2" fill="none" opacity="0.22" stroke-linecap="round"/>
<!-- band -->
<path d="M17.2 30.6C28 40.6 61 41.2 71.8 32.4" stroke="#2e1606" stroke-width="5.3" fill="none" opacity=".35"/>
<path d="M17.2 30.8C28 39.8 61 40.4 71.8 32.6" stroke="#efe6da" stroke-width="3.3" fill="none"/>
<!-- cutout -->
<path d="M44.8 2.6C37 7 29.6 17 27.6 29.4C38 33.4 52 33.6 62.4 29.8C61 18 52 7 44.8 2.6Z" fill="#4c280c"/>
<path d="M44.8 2.6C37 7 29.6 17 27.6 29.4L33 30.4C34 20 39 11 44.8 7.6Z" fill="#2e1606" opacity=".8"/>
<path d="M44.8 2.6C52 7 61 18 62.4 29.8L59.4 30.4C58 20 51.6 11 44.8 7.6Z" fill="#b67e48" opacity=".6"/>
</g>
<path d="M32.4 28.2C33.2 19.4 38.4 10.4 44.2 9.2C50.2 10.8 56.8 19.4 58.3 28.6C50.4 31 40 30.8 32.4 28.2Z" fill="url(#dome)"/><path d="M32.4 28.2C33.2 19.4 38.4 10.4 44.2 9.2C50.2 10.8 56.8 19.4 58.3 28.6C50.4 31 40 30.8 32.4 28.2Z" fill="url(#domev)"/>
<rect x="42.4" y="14" width="1.5" height="1.6" fill="#3a3a44" opacity=".8"/><rect x="44.9" y="14" width="1.5" height="1.6" fill="#3a3a44" opacity=".8"/>
<rect x="41.8" y="17" width="5.2" height="1" fill="#5a6068" opacity=".7"/>
<rect x="40" y="21.6" width="9" height="0.9" fill="#a8c4dc" opacity=".6"/>
</svg><div class="lb">5 (VRayMtl)</div></div>
<div class="th" style="left:202.8px;top:113.5px"><svg viewBox="0 0 89.6 83" preserveAspectRatio="none">
<defs>
<radialGradient id="b5s" cx="0.38" cy="0.32" r="0.74" fx="0.32" fy="0.22"><stop offset="0" stop-color="#e0a24c"/><stop offset="0.5" stop-color="#bc7620"/><stop offset="0.88" stop-color="#8a4c0a"/><stop offset="1" stop-color="#5c3004"/></radialGradient>
<linearGradient id="b5h" x1="0" y1="0" x2="1" y2="0"><stop offset="0" stop-color="#8a4c0a"/><stop offset="0.28" stop-color="#e0a24c"/><stop offset="0.6" stop-color="#bc7620"/><stop offset="1" stop-color="#5c3004"/></linearGradient>
<linearGradient id="b5h2" x1="0" y1="0" x2="1" y2="0"><stop offset="0" stop-color="#bc7620"/><stop offset="0.35" stop-color="#e0a24c"/><stop offset="0.7" stop-color="#bc7620"/><stop offset="1" stop-color="#8a4c0a"/></linearGradient>
<linearGradient id="b5v" x1="0" y1="0" x2="0" y2="1"><stop offset="0" stop-color="#5c3004" stop-opacity=".0"/><stop offset="1" stop-color="#5c3004" stop-opacity=".6"/></linearGradient>
<linearGradient id="b5sp" x1="0" y1="0" x2="0" y2="1"><stop offset="0" stop-color="#e0a24c"/><stop offset="0.5" stop-color="#bc7620"/><stop offset="1" stop-color="#5c3004"/></linearGradient>
<clipPath id="b5c"><circle cx="44.5" cy="27.9" r="27"/></clipPath>
</defs>
<use href="#bgfloor"/>
<!-- outer base -->
<path d="M12.8 62.5A32 9.5 0 0 1 76.8 62.5L72.6 70.6A27.8 8.4 0 0 1 17 70.6Z" fill="url(#b5h)"/>
<path d="M12.8 62.5A32 9.5 0 0 1 76.8 62.5L72.6 70.6A27.8 8.4 0 0 1 17 70.6Z" fill="url(#b5v)"/>
<ellipse cx="44.8" cy="62.5" rx="32" ry="9.5" fill="url(#b5h2)"/>
<ellipse cx="44.7" cy="60.6" rx="23.8" ry="9" fill="#5c3004" opacity=".75"/>
<!-- spikes -->
<path d="M2.6 50.4C9 52.8 16 55.8 23.5 59.6L21 64C14.6 59.6 8.4 55 2.6 50.4Z" fill="url(#b5sp)"/>
<path d="M2.6 50.4C9 52.8 16 55.8 23.5 59.6L21 64C14.6 59.6 8.4 55 2.6 50.4Z" fill="#5c3004" opacity=".3"/>
<path d="M84 51.4C78 53.2 72 55.8 65.5 59.4L69 63.8C74.6 59.6 79.6 55.4 84 51.4Z" fill="url(#b5h2)"/>
<path d="M84 51.4C79.6 55.4 74.6 59.6 69 63.8L67.4 61.8C73 58.2 79 54.8 84 51.4Z" fill="#5c3004" opacity=".3"/>
<!-- inner dome -->
<ellipse cx="44.6" cy="59" rx="21.9" ry="8.7" fill="url(#b5h)"/>
<ellipse cx="44.6" cy="57.4" rx="19" ry="6.6" fill="url(#b5h2)" opacity=".8"/>
<!-- neck -->
<path d="M22 40C25 47 30 50 30.2 53.4C32 57.8 58 57.8 59.8 53.4C60 50 65 47 68 40Z" fill="url(#b5h)"/>
<path d="M22 40C25 47 30 50 30.2 53.4C32 57.8 58 57.8 59.8 53.4C60 50 65 47 68 40Z" fill="#5c3004" opacity=".4"/>
<!-- sphere -->
<circle cx="44.5" cy="27.9" r="27" fill="url(#b5s)"/>
<g clip-path="url(#b5c)">
<rect x="15" y="0" width="60" height="58" fill="#000" filter="url(#wood)" opacity="0.5"/>
<path d="M17 31C30 43 60 43 72 32L72 60L17 60Z" fill="#5c3004" opacity=".3"/>
<ellipse cx="42" cy="52" rx="15" ry="4.5" fill="#e0a24c" opacity=".3"/>
<ellipse cx="30" cy="14" rx="9" ry="6" fill="#fff" opacity="0.25" transform="rotate(-38 30 14)"/>
<path d="M24 8C20 14 18.6 22 19.6 30" stroke="#fff" stroke-width="2.2" fill="none" opacity="0.17" stroke-linecap="round"/>
<!-- band -->
<path d="M17.2 30.6C28 40.6 61 41.2 71.8 32.4" stroke="#5c3004" stroke-width="5.3" fill="none" opacity=".35"/>
<path d="M17.2 30.8C28 39.8 61 40.4 71.8 32.6" stroke="#f0e4d2" stroke-width="3.3" fill="none"/>
<!-- cutout -->
<path d="M44.8 2.6C37 7 29.6 17 27.6 29.4C38 33.4 52 33.6 62.4 29.8C61 18 52 7 44.8 2.6Z" fill="#8a4c0a"/>
<path d="M44.8 2.6C37 7 29.6 17 27.6 29.4L33 30.4C34 20 39 11 44.8 7.6Z" fill="#5c3004" opacity=".8"/>
<path d="M44.8 2.6C52 7 61 18 62.4 29.8L59.4 30.4C58 20 51.6 11 44.8 7.6Z" fill="#e0a24c" opacity=".6"/>
</g>
<path d="M32.4 28.2C33.2 19.4 38.4 10.4 44.2 9.2C50.2 10.8 56.8 19.4 58.3 28.6C50.4 31 40 30.8 32.4 28.2Z" fill="url(#dome)"/><path d="M32.4 28.2C33.2 19.4 38.4 10.4 44.2 9.2C50.2 10.8 56.8 19.4 58.3 28.6C50.4 31 40 30.8 32.4 28.2Z" fill="url(#domev)"/>
<rect x="42.4" y="14" width="1.5" height="1.6" fill="#3a3a44" opacity=".8"/><rect x="44.9" y="14" width="1.5" height="1.6" fill="#3a3a44" opacity=".8"/>
<rect x="41.8" y="17" width="5.2" height="1" fill="#5a6068" opacity=".7"/>
<rect x="40" y="21.6" width="9" height="0.9" fill="#a8c4dc" opacity=".6"/>
</svg><div class="lb">6 (VRayMtl)</div></div>
<div class="th" style="left:7.2px;top:220.0px"><svg viewBox="0 0 89.6 83" preserveAspectRatio="none">
<defs>
<radialGradient id="b6s" cx="0.38" cy="0.32" r="0.74" fx="0.32" fy="0.22"><stop offset="0" stop-color="#f4cf8e"/><stop offset="0.5" stop-color="#de9e48"/><stop offset="0.88" stop-color="#b4742a"/><stop offset="1" stop-color="#845016"/></radialGradient>
<linearGradient id="b6h" x1="0" y1="0" x2="1" y2="0"><stop offset="0" stop-color="#b4742a"/><stop offset="0.28" stop-color="#f4cf8e"/><stop offset="0.6" stop-color="#de9e48"/><stop offset="1" stop-color="#845016"/></linearGradient>
<linearGradient id="b6h2" x1="0" y1="0" x2="1" y2="0"><stop offset="0" stop-color="#de9e48"/><stop offset="0.35" stop-color="#f4cf8e"/><stop offset="0.7" stop-color="#de9e48"/><stop offset="1" stop-color="#b4742a"/></linearGradient>
<linearGradient id="b6v" x1="0" y1="0" x2="0" y2="1"><stop offset="0" stop-color="#845016" stop-opacity=".0"/><stop offset="1" stop-color="#845016" stop-opacity=".6"/></linearGradient>
<linearGradient id="b6sp" x1="0" y1="0" x2="0" y2="1"><stop offset="0" stop-color="#f4cf8e"/><stop offset="0.5" stop-color="#de9e48"/><stop offset="1" stop-color="#845016"/></linearGradient>
<clipPath id="b6c"><circle cx="44.5" cy="27.9" r="27"/></clipPath>
</defs>
<use href="#bgfloor"/>
<!-- outer base -->
<path d="M12.8 62.5A32 9.5 0 0 1 76.8 62.5L72.6 70.6A27.8 8.4 0 0 1 17 70.6Z" fill="url(#b6h)"/>
<path d="M12.8 62.5A32 9.5 0 0 1 76.8 62.5L72.6 70.6A27.8 8.4 0 0 1 17 70.6Z" fill="url(#b6v)"/>
<ellipse cx="44.8" cy="62.5" rx="32" ry="9.5" fill="url(#b6h2)"/>
<ellipse cx="44.7" cy="60.6" rx="23.8" ry="9" fill="#845016" opacity=".75"/>
<!-- spikes -->
<path d="M2.6 50.4C9 52.8 16 55.8 23.5 59.6L21 64C14.6 59.6 8.4 55 2.6 50.4Z" fill="url(#b6sp)"/>
<path d="M2.6 50.4C9 52.8 16 55.8 23.5 59.6L21 64C14.6 59.6 8.4 55 2.6 50.4Z" fill="#845016" opacity=".3"/>
<path d="M84 51.4C78 53.2 72 55.8 65.5 59.4L69 63.8C74.6 59.6 79.6 55.4 84 51.4Z" fill="url(#b6h2)"/>
<path d="M84 51.4C79.6 55.4 74.6 59.6 69 63.8L67.4 61.8C73 58.2 79 54.8 84 51.4Z" fill="#845016" opacity=".3"/>
<!-- inner dome -->
<ellipse cx="44.6" cy="59" rx="21.9" ry="8.7" fill="url(#b6h)"/>
<ellipse cx="44.6" cy="57.4" rx="19" ry="6.6" fill="url(#b6h2)" opacity=".8"/>
<!-- neck -->
<path d="M22 40C25 47 30 50 30.2 53.4C32 57.8 58 57.8 59.8 53.4C60 50 65 47 68 40Z" fill="url(#b6h)"/>
<path d="M22 40C25 47 30 50 30.2 53.4C32 57.8 58 57.8 59.8 53.4C60 50 65 47 68 40Z" fill="#845016" opacity=".4"/>
<!-- sphere -->
<circle cx="44.5" cy="27.9" r="27" fill="url(#b6s)"/>
<g clip-path="url(#b6c)">
<rect x="15" y="0" width="60" height="58" fill="#000" filter="url(#wood)" opacity="0.28"/>
<path d="M17 31C30 43 60 43 72 32L72 60L17 60Z" fill="#845016" opacity=".3"/>
<ellipse cx="42" cy="52" rx="15" ry="4.5" fill="#f4cf8e" opacity=".3"/>
<ellipse cx="30" cy="14" rx="9" ry="6" fill="#fff" opacity="0.17" transform="rotate(-38 30 14)"/>
<path d="M24 8C20 14 18.6 22 19.6 30" stroke="#fff" stroke-width="2.2" fill="none" opacity="0.00" stroke-linecap="round"/>
<!-- band -->
<path d="M17.2 30.6C28 40.6 61 41.2 71.8 32.4" stroke="#845016" stroke-width="4.2" fill="none" opacity=".35"/>
<path d="M17.2 30.8C28 39.8 61 40.4 71.8 32.6" stroke="#e8e0d2" stroke-width="2.2" fill="none"/>
<!-- cutout -->
<path d="M44.8 2.6C37 7 29.6 17 27.6 29.4C38 33.4 52 33.6 62.4 29.8C61 18 52 7 44.8 2.6Z" fill="#b4742a"/>
<path d="M44.8 2.6C37 7 29.6 17 27.6 29.4L33 30.4C34 20 39 11 44.8 7.6Z" fill="#845016" opacity=".8"/>
<path d="M44.8 2.6C52 7 61 18 62.4 29.8L59.4 30.4C58 20 51.6 11 44.8 7.6Z" fill="#f4cf8e" opacity=".6"/>
</g>
<path d="M32.4 28.2C33.2 19.4 38.4 10.4 44.2 9.2C50.2 10.8 56.8 19.4 58.3 28.6C50.4 31 40 30.8 32.4 28.2Z" fill="url(#dome)"/><path d="M32.4 28.2C33.2 19.4 38.4 10.4 44.2 9.2C50.2 10.8 56.8 19.4 58.3 28.6C50.4 31 40 30.8 32.4 28.2Z" fill="url(#domev)"/>
<rect x="42.4" y="14" width="1.5" height="1.6" fill="#3a3a44" opacity=".8"/><rect x="44.9" y="14" width="1.5" height="1.6" fill="#3a3a44" opacity=".8"/>
<rect x="41.8" y="17" width="5.2" height="1" fill="#5a6068" opacity=".7"/>
<rect x="40" y="21.6" width="9" height="0.9" fill="#a8c4dc" opacity=".6"/>
</svg><div class="lb">7 (VRayMtl)</div></div>
<div class="th" style="left:105.0px;top:220.0px"><svg viewBox="0 0 89.6 83" preserveAspectRatio="none">
<defs>
<radialGradient id="b7s" cx="0.38" cy="0.32" r="0.74" fx="0.32" fy="0.22"><stop offset="0" stop-color="#f4d194"/><stop offset="0.5" stop-color="#dea250"/><stop offset="0.88" stop-color="#b47830"/><stop offset="1" stop-color="#84541a"/></radialGradient>
<linearGradient id="b7h" x1="0" y1="0" x2="1" y2="0"><stop offset="0" stop-color="#b47830"/><stop offset="0.28" stop-color="#f4d194"/><stop offset="0.6" stop-color="#dea250"/><stop offset="1" stop-color="#84541a"/></linearGradient>
<linearGradient id="b7h2" x1="0" y1="0" x2="1" y2="0"><stop offset="0" stop-color="#dea250"/><stop offset="0.35" stop-color="#f4d194"/><stop offset="0.7" stop-color="#dea250"/><stop offset="1" stop-color="#b47830"/></linearGradient>
<linearGradient id="b7v" x1="0" y1="0" x2="0" y2="1"><stop offset="0" stop-color="#84541a" stop-opacity=".0"/><stop offset="1" stop-color="#84541a" stop-opacity=".6"/></linearGradient>
<linearGradient id="b7sp" x1="0" y1="0" x2="0" y2="1"><stop offset="0" stop-color="#f4d194"/><stop offset="0.5" stop-color="#dea250"/><stop offset="1" stop-color="#84541a"/></linearGradient>
<clipPath id="b7c"><circle cx="44.5" cy="27.9" r="27"/></clipPath>
</defs>
<use href="#bgfloor"/>
<!-- outer base -->
<path d="M12.8 62.5A32 9.5 0 0 1 76.8 62.5L72.6 70.6A27.8 8.4 0 0 1 17 70.6Z" fill="url(#b7h)"/>
<path d="M12.8 62.5A32 9.5 0 0 1 76.8 62.5L72.6 70.6A27.8 8.4 0 0 1 17 70.6Z" fill="url(#b7v)"/>
<ellipse cx="44.8" cy="62.5" rx="32" ry="9.5" fill="url(#b7h2)"/>
<ellipse cx="44.7" cy="60.6" rx="23.8" ry="9" fill="#84541a" opacity=".75"/>
<!-- spikes -->
<path d="M2.6 50.4C9 52.8 16 55.8 23.5 59.6L21 64C14.6 59.6 8.4 55 2.6 50.4Z" fill="url(#b7sp)"/>
<path d="M2.6 50.4C9 52.8 16 55.8 23.5 59.6L21 64C14.6 59.6 8.4 55 2.6 50.4Z" fill="#84541a" opacity=".3"/>
<path d="M84 51.4C78 53.2 72 55.8 65.5 59.4L69 63.8C74.6 59.6 79.6 55.4 84 51.4Z" fill="url(#b7h2)"/>
<path d="M84 51.4C79.6 55.4 74.6 59.6 69 63.8L67.4 61.8C73 58.2 79 54.8 84 51.4Z" fill="#84541a" opacity=".3"/>
<!-- inner dome -->
<ellipse cx="44.6" cy="59" rx="21.9" ry="8.7" fill="url(#b7h)"/>
<ellipse cx="44.6" cy="57.4" rx="19" ry="6.6" fill="url(#b7h2)" opacity=".8"/>
<!-- neck -->
<path d="M22 40C25 47 30 50 30.2 53.4C32 57.8 58 57.8 59.8 53.4C60 50 65 47 68 40Z" fill="url(#b7h)"/>
<path d="M22 40C25 47 30 50 30.2 53.4C32 57.8 58 57.8 59.8 53.4C60 50 65 47 68 40Z" fill="#84541a" opacity=".4"/>
<!-- sphere -->
<circle cx="44.5" cy="27.9" r="27" fill="url(#b7s)"/>
<g clip-path="url(#b7c)">
<rect x="15" y="0" width="60" height="58" fill="#000" filter="url(#wood)" opacity="0.28"/>
<path d="M17 31C30 43 60 43 72 32L72 60L17 60Z" fill="#84541a" opacity=".3"/>
<ellipse cx="42" cy="52" rx="15" ry="4.5" fill="#f4d194" opacity=".3"/>
<ellipse cx="30" cy="14" rx="9" ry="6" fill="#fff" opacity="0.17" transform="rotate(-38 30 14)"/>
<path d="M24 8C20 14 18.6 22 19.6 30" stroke="#fff" stroke-width="2.2" fill="none" opacity="0.00" stroke-linecap="round"/>
<!-- band -->
<path d="M17.2 30.6C28 40.6 61 41.2 71.8 32.4" stroke="#84541a" stroke-width="4.2" fill="none" opacity=".35"/>
<path d="M17.2 30.8C28 39.8 61 40.4 71.8 32.6" stroke="#e8e0d2" stroke-width="2.2" fill="none"/>
<!-- cutout -->
<path d="M44.8 2.6C37 7 29.6 17 27.6 29.4C38 33.4 52 33.6 62.4 29.8C61 18 52 7 44.8 2.6Z" fill="#b47830"/>
<path d="M44.8 2.6C37 7 29.6 17 27.6 29.4L33 30.4C34 20 39 11 44.8 7.6Z" fill="#84541a" opacity=".8"/>
<path d="M44.8 2.6C52 7 61 18 62.4 29.8L59.4 30.4C58 20 51.6 11 44.8 7.6Z" fill="#f4d194" opacity=".6"/>
</g>
<path d="M32.4 28.2C33.2 19.4 38.4 10.4 44.2 9.2C50.2 10.8 56.8 19.4 58.3 28.6C50.4 31 40 30.8 32.4 28.2Z" fill="url(#dome)"/><path d="M32.4 28.2C33.2 19.4 38.4 10.4 44.2 9.2C50.2 10.8 56.8 19.4 58.3 28.6C50.4 31 40 30.8 32.4 28.2Z" fill="url(#domev)"/>
<rect x="42.4" y="14" width="1.5" height="1.6" fill="#3a3a44" opacity=".8"/><rect x="44.9" y="14" width="1.5" height="1.6" fill="#3a3a44" opacity=".8"/>
<rect x="41.8" y="17" width="5.2" height="1" fill="#5a6068" opacity=".7"/>
<rect x="40" y="21.6" width="9" height="0.9" fill="#a8c4dc" opacity=".6"/>
</svg><div class="lb">8 (VRayMtl)</div></div>
<div class="th" style="left:202.8px;top:220.0px"><svg viewBox="0 0 89.6 83" preserveAspectRatio="none">
<defs>
<radialGradient id="b8s" cx="0.38" cy="0.32" r="0.74" fx="0.32" fy="0.22"><stop offset="0" stop-color="#f4d398"/><stop offset="0.5" stop-color="#dea556"/><stop offset="0.88" stop-color="#b47c34"/><stop offset="1" stop-color="#84581e"/></radialGradient>
<linearGradient id="b8h" x1="0" y1="0" x2="1" y2="0"><stop offset="0" stop-color="#b47c34"/><stop offset="0.28" stop-color="#f4d398"/><stop offset="0.6" stop-color="#dea556"/><stop offset="1" stop-color="#84581e"/></linearGradient>
<linearGradient id="b8h2" x1="0" y1="0" x2="1" y2="0"><stop offset="0" stop-color="#dea556"/><stop offset="0.35" stop-color="#f4d398"/><stop offset="0.7" stop-color="#dea556"/><stop offset="1" stop-color="#b47c34"/></linearGradient>
<linearGradient id="b8v" x1="0" y1="0" x2="0" y2="1"><stop offset="0" stop-color="#84581e" stop-opacity=".0"/><stop offset="1" stop-color="#84581e" stop-opacity=".6"/></linearGradient>
<linearGradient id="b8sp" x1="0" y1="0" x2="0" y2="1"><stop offset="0" stop-color="#f4d398"/><stop offset="0.5" stop-color="#dea556"/><stop offset="1" stop-color="#84581e"/></linearGradient>
<clipPath id="b8c"><circle cx="44.5" cy="27.9" r="27"/></clipPath>
</defs>
<use href="#bgfloor"/>
<!-- outer base -->
<path d="M12.8 62.5A32 9.5 0 0 1 76.8 62.5L72.6 70.6A27.8 8.4 0 0 1 17 70.6Z" fill="url(#b8h)"/>
<path d="M12.8 62.5A32 9.5 0 0 1 76.8 62.5L72.6 70.6A27.8 8.4 0 0 1 17 70.6Z" fill="url(#b8v)"/>
<ellipse cx="44.8" cy="62.5" rx="32" ry="9.5" fill="url(#b8h2)"/>
<ellipse cx="44.7" cy="60.6" rx="23.8" ry="9" fill="#84581e" opacity=".75"/>
<!-- spikes -->
<path d="M2.6 50.4C9 52.8 16 55.8 23.5 59.6L21 64C14.6 59.6 8.4 55 2.6 50.4Z" fill="url(#b8sp)"/>
<path d="M2.6 50.4C9 52.8 16 55.8 23.5 59.6L21 64C14.6 59.6 8.4 55 2.6 50.4Z" fill="#84581e" opacity=".3"/>
<path d="M84 51.4C78 53.2 72 55.8 65.5 59.4L69 63.8C74.6 59.6 79.6 55.4 84 51.4Z" fill="url(#b8h2)"/>
<path d="M84 51.4C79.6 55.4 74.6 59.6 69 63.8L67.4 61.8C73 58.2 79 54.8 84 51.4Z" fill="#84581e" opacity=".3"/>
<!-- inner dome -->
<ellipse cx="44.6" cy="59" rx="21.9" ry="8.7" fill="url(#b8h)"/>
<ellipse cx="44.6" cy="57.4" rx="19" ry="6.6" fill="url(#b8h2)" opacity=".8"/>
<!-- neck -->
<path d="M22 40C25 47 30 50 30.2 53.4C32 57.8 58 57.8 59.8 53.4C60 50 65 47 68 40Z" fill="url(#b8h)"/>
<path d="M22 40C25 47 30 50 30.2 53.4C32 57.8 58 57.8 59.8 53.4C60 50 65 47 68 40Z" fill="#84581e" opacity=".4"/>
<!-- sphere -->
<circle cx="44.5" cy="27.9" r="27" fill="url(#b8s)"/>
<g clip-path="url(#b8c)">
<rect x="15" y="0" width="60" height="58" fill="#000" filter="url(#wood)" opacity="0.28"/>
<path d="M17 31C30 43 60 43 72 32L72 60L17 60Z" fill="#84581e" opacity=".3"/>
<ellipse cx="42" cy="52" rx="15" ry="4.5" fill="#f4d398" opacity=".3"/>
<ellipse cx="30" cy="14" rx="9" ry="6" fill="#fff" opacity="0.17" transform="rotate(-38 30 14)"/>
<path d="M24 8C20 14 18.6 22 19.6 30" stroke="#fff" stroke-width="2.2" fill="none" opacity="0.00" stroke-linecap="round"/>
<!-- band -->
<path d="M17.2 30.6C28 40.6 61 41.2 71.8 32.4" stroke="#84581e" stroke-width="4.2" fill="none" opacity=".35"/>
<path d="M17.2 30.8C28 39.8 61 40.4 71.8 32.6" stroke="#e8e0d2" stroke-width="2.2" fill="none"/>
<!-- cutout -->
<path d="M44.8 2.6C37 7 29.6 17 27.6 29.4C38 33.4 52 33.6 62.4 29.8C61 18 52 7 44.8 2.6Z" fill="#b47c34"/>
<path d="M44.8 2.6C37 7 29.6 17 27.6 29.4L33 30.4C34 20 39 11 44.8 7.6Z" fill="#84581e" opacity=".8"/>
<path d="M44.8 2.6C52 7 61 18 62.4 29.8L59.4 30.4C58 20 51.6 11 44.8 7.6Z" fill="#f4d398" opacity=".6"/>
</g>
<path d="M32.4 28.2C33.2 19.4 38.4 10.4 44.2 9.2C50.2 10.8 56.8 19.4 58.3 28.6C50.4 31 40 30.8 32.4 28.2Z" fill="url(#dome)"/><path d="M32.4 28.2C33.2 19.4 38.4 10.4 44.2 9.2C50.2 10.8 56.8 19.4 58.3 28.6C50.4 31 40 30.8 32.4 28.2Z" fill="url(#domev)"/>
<rect x="42.4" y="14" width="1.5" height="1.6" fill="#3a3a44" opacity=".8"/><rect x="44.9" y="14" width="1.5" height="1.6" fill="#3a3a44" opacity=".8"/>
<rect x="41.8" y="17" width="5.2" height="1" fill="#5a6068" opacity=".7"/>
<rect x="40" y="21.6" width="9" height="0.9" fill="#a8c4dc" opacity=".6"/>
</svg><div class="lb">9 (VRayMtl)</div></div>
<div class="th" style="left:7.2px;top:326.5px"><svg viewBox="0 0 89.6 83" preserveAspectRatio="none">
<defs>
<radialGradient id="b9s" cx="0.38" cy="0.32" r="0.74" fx="0.32" fy="0.22"><stop offset="0" stop-color="#c08048"/><stop offset="0.5" stop-color="#84481c"/><stop offset="0.88" stop-color="#4e240c"/><stop offset="1" stop-color="#2c1206"/></radialGradient>
<linearGradient id="b9h" x1="0" y1="0" x2="1" y2="0"><stop offset="0" stop-color="#4e240c"/><stop offset="0.28" stop-color="#c08048"/><stop offset="0.6" stop-color="#84481c"/><stop offset="1" stop-color="#2c1206"/></linearGradient>
<linearGradient id="b9h2" x1="0" y1="0" x2="1" y2="0"><stop offset="0" stop-color="#84481c"/><stop offset="0.35" stop-color="#c08048"/><stop offset="0.7" stop-color="#84481c"/><stop offset="1" stop-color="#4e240c"/></linearGradient>
<linearGradient id="b9v" x1="0" y1="0" x2="0" y2="1"><stop offset="0" stop-color="#2c1206" stop-opacity=".0"/><stop offset="1" stop-color="#2c1206" stop-opacity=".6"/></linearGradient>
<linearGradient id="b9sp" x1="0" y1="0" x2="0" y2="1"><stop offset="0" stop-color="#c08048"/><stop offset="0.5" stop-color="#84481c"/><stop offset="1" stop-color="#2c1206"/></linearGradient>
<clipPath id="b9c"><circle cx="44.5" cy="27.9" r="27"/></clipPath>
</defs>
<use href="#bgfloor"/>
<!-- outer base -->
<path d="M12.8 62.5A32 9.5 0 0 1 76.8 62.5L72.6 70.6A27.8 8.4 0 0 1 17 70.6Z" fill="url(#b9h)"/>
<path d="M12.8 62.5A32 9.5 0 0 1 76.8 62.5L72.6 70.6A27.8 8.4 0 0 1 17 70.6Z" fill="url(#b9v)"/>
<ellipse cx="44.8" cy="62.5" rx="32" ry="9.5" fill="url(#b9h2)"/>
<ellipse cx="44.7" cy="60.6" rx="23.8" ry="9" fill="#2c1206" opacity=".75"/>
<!-- spikes -->
<path d="M2.6 50.4C9 52.8 16 55.8 23.5 59.6L21 64C14.6 59.6 8.4 55 2.6 50.4Z" fill="url(#b9sp)"/>
<path d="M2.6 50.4C9 52.8 16 55.8 23.5 59.6L21 64C14.6 59.6 8.4 55 2.6 50.4Z" fill="#2c1206" opacity=".3"/>
<path d="M84 51.4C78 53.2 72 55.8 65.5 59.4L69 63.8C74.6 59.6 79.6 55.4 84 51.4Z" fill="url(#b9h2)"/>
<path d="M84 51.4C79.6 55.4 74.6 59.6 69 63.8L67.4 61.8C73 58.2 79 54.8 84 51.4Z" fill="#2c1206" opacity=".3"/>
<!-- inner dome -->
<ellipse cx="44.6" cy="59" rx="21.9" ry="8.7" fill="url(#b9h)"/>
<ellipse cx="44.6" cy="57.4" rx="19" ry="6.6" fill="url(#b9h2)" opacity=".8"/>
<!-- neck -->
<path d="M22 40C25 47 30 50 30.2 53.4C32 57.8 58 57.8 59.8 53.4C60 50 65 47 68 40Z" fill="url(#b9h)"/>
<path d="M22 40C25 47 30 50 30.2 53.4C32 57.8 58 57.8 59.8 53.4C60 50 65 47 68 40Z" fill="#2c1206" opacity=".4"/>
<!-- sphere -->
<circle cx="44.5" cy="27.9" r="27" fill="url(#b9s)"/>
<g clip-path="url(#b9c)">
<rect x="15" y="0" width="60" height="58" fill="#000" filter="url(#wood)" opacity="0.55"/>
<path d="M17 31C30 43 60 43 72 32L72 60L17 60Z" fill="#2c1206" opacity=".3"/>
<ellipse cx="42" cy="52" rx="15" ry="4.5" fill="#c08048" opacity=".3"/>
<ellipse cx="30" cy="14" rx="9" ry="6" fill="#fff" opacity="0.33" transform="rotate(-38 30 14)"/>
<path d="M24 8C20 14 18.6 22 19.6 30" stroke="#fff" stroke-width="2.2" fill="none" opacity="0.33" stroke-linecap="round"/>
<!-- band -->
<path d="M17.2 30.6C28 40.6 61 41.2 71.8 32.4" stroke="#2c1206" stroke-width="5.3" fill="none" opacity=".35"/>
<path d="M17.2 30.8C28 39.8 61 40.4 71.8 32.6" stroke="#efe8e0" stroke-width="3.3" fill="none"/>
<!-- cutout -->
<path d="M44.8 2.6C37 7 29.6 17 27.6 29.4C38 33.4 52 33.6 62.4 29.8C61 18 52 7 44.8 2.6Z" fill="#4e240c"/>
<path d="M44.8 2.6C37 7 29.6 17 27.6 29.4L33 30.4C34 20 39 11 44.8 7.6Z" fill="#2c1206" opacity=".8"/>
<path d="M44.8 2.6C52 7 61 18 62.4 29.8L59.4 30.4C58 20 51.6 11 44.8 7.6Z" fill="#c08048" opacity=".6"/>
</g>
<path d="M32.4 28.2C33.2 19.4 38.4 10.4 44.2 9.2C50.2 10.8 56.8 19.4 58.3 28.6C50.4 31 40 30.8 32.4 28.2Z" fill="url(#dome)"/><path d="M32.4 28.2C33.2 19.4 38.4 10.4 44.2 9.2C50.2 10.8 56.8 19.4 58.3 28.6C50.4 31 40 30.8 32.4 28.2Z" fill="url(#domev)"/>
<rect x="42.4" y="14" width="1.5" height="1.6" fill="#3a3a44" opacity=".8"/><rect x="44.9" y="14" width="1.5" height="1.6" fill="#3a3a44" opacity=".8"/>
<rect x="41.8" y="17" width="5.2" height="1" fill="#5a6068" opacity=".7"/>
<rect x="40" y="21.6" width="9" height="0.9" fill="#a8c4dc" opacity=".6"/>
</svg><div class="lb">10 (VRayMtl)</div></div>
<div class="th" style="left:105.0px;top:326.5px"><svg viewBox="0 0 89.6 83" preserveAspectRatio="none">
<defs>
<radialGradient id="b10s" cx="0.38" cy="0.32" r="0.74" fx="0.32" fy="0.22"><stop offset="0" stop-color="#f2e6d8"/><stop offset="0.5" stop-color="#dcc9b4"/><stop offset="0.88" stop-color="#b49c86"/><stop offset="1" stop-color="#86705c"/></radialGradient>
<linearGradient id="b10h" x1="0" y1="0" x2="1" y2="0"><stop offset="0" stop-color="#b49c86"/><stop offset="0.28" stop-color="#f2e6d8"/><stop offset="0.6" stop-color="#dcc9b4"/><stop offset="1" stop-color="#86705c"/></linearGradient>
<linearGradient id="b10h2" x1="0" y1="0" x2="1" y2="0"><stop offset="0" stop-color="#dcc9b4"/><stop offset="0.35" stop-color="#f2e6d8"/><stop offset="0.7" stop-color="#dcc9b4"/><stop offset="1" stop-color="#b49c86"/></linearGradient>
<linearGradient id="b10v" x1="0" y1="0" x2="0" y2="1"><stop offset="0" stop-color="#86705c" stop-opacity=".0"/><stop offset="1" stop-color="#86705c" stop-opacity=".6"/></linearGradient>
<linearGradient id="b10sp" x1="0" y1="0" x2="0" y2="1"><stop offset="0" stop-color="#f2e6d8"/><stop offset="0.5" stop-color="#dcc9b4"/><stop offset="1" stop-color="#86705c"/></linearGradient>
<clipPath id="b10c"><circle cx="44.5" cy="27.9" r="27"/></clipPath>
</defs>
<use href="#bgfloor"/>
<!-- outer base -->
<path d="M12.8 62.5A32 9.5 0 0 1 76.8 62.5L72.6 70.6A27.8 8.4 0 0 1 17 70.6Z" fill="url(#b10h)"/>
<path d="M12.8 62.5A32 9.5 0 0 1 76.8 62.5L72.6 70.6A27.8 8.4 0 0 1 17 70.6Z" fill="url(#b10v)"/>
<ellipse cx="44.8" cy="62.5" rx="32" ry="9.5" fill="url(#b10h2)"/>
<ellipse cx="44.7" cy="60.6" rx="23.8" ry="9" fill="#86705c" opacity=".75"/>
<!-- spikes -->
<path d="M2.6 50.4C9 52.8 16 55.8 23.5 59.6L21 64C14.6 59.6 8.4 55 2.6 50.4Z" fill="url(#b10sp)"/>
<path d="M2.6 50.4C9 52.8 16 55.8 23.5 59.6L21 64C14.6 59.6 8.4 55 2.6 50.4Z" fill="#86705c" opacity=".3"/>
<path d="M84 51.4C78 53.2 72 55.8 65.5 59.4L69 63.8C74.6 59.6 79.6 55.4 84 51.4Z" fill="url(#b10h2)"/>
<path d="M84 51.4C79.6 55.4 74.6 59.6 69 63.8L67.4 61.8C73 58.2 79 54.8 84 51.4Z" fill="#86705c" opacity=".3"/>
<!-- inner dome -->
<ellipse cx="44.6" cy="59" rx="21.9" ry="8.7" fill="url(#b10h)"/>
<ellipse cx="44.6" cy="57.4" rx="19" ry="6.6" fill="url(#b10h2)" opacity=".8"/>
<!-- neck -->
<path d="M22 40C25 47 30 50 30.2 53.4C32 57.8 58 57.8 59.8 53.4C60 50 65 47 68 40Z" fill="url(#b10h)"/>
<path d="M22 40C25 47 30 50 30.2 53.4C32 57.8 58 57.8 59.8 53.4C60 50 65 47 68 40Z" fill="#86705c" opacity=".4"/>
<!-- sphere -->
<circle cx="44.5" cy="27.9" r="27" fill="url(#b10s)"/>
<g clip-path="url(#b10c)">
<rect x="15" y="0" width="60" height="58" fill="#000" filter="url(#wood)" opacity="0.25"/>
<path d="M17 31C30 43 60 43 72 32L72 60L17 60Z" fill="#86705c" opacity=".3"/>
<ellipse cx="42" cy="52" rx="15" ry="4.5" fill="#f2e6d8" opacity=".3"/>
<ellipse cx="30" cy="14" rx="9" ry="6" fill="#fff" opacity="0.19" transform="rotate(-38 30 14)"/>
<path d="M24 8C20 14 18.6 22 19.6 30" stroke="#fff" stroke-width="2.2" fill="none" opacity="0.05" stroke-linecap="round"/>
<!-- band -->
<path d="M17.2 30.6C28 40.6 61 41.2 71.8 32.4" stroke="#86705c" stroke-width="4.4" fill="none" opacity=".35"/>
<path d="M17.2 30.8C28 39.8 61 40.4 71.8 32.6" stroke="#eef2f4" stroke-width="2.4" fill="none"/>
<!-- cutout -->
<path d="M44.8 2.6C37 7 29.6 17 27.6 29.4C38 33.4 52 33.6 62.4 29.8C61 18 52 7 44.8 2.6Z" fill="#b49c86"/>
<path d="M44.8 2.6C37 7 29.6 17 27.6 29.4L33 30.4C34 20 39 11 44.8 7.6Z" fill="#86705c" opacity=".8"/>
<path d="M44.8 2.6C52 7 61 18 62.4 29.8L59.4 30.4C58 20 51.6 11 44.8 7.6Z" fill="#f2e6d8" opacity=".6"/>
</g>
<path d="M32.4 28.2C33.2 19.4 38.4 10.4 44.2 9.2C50.2 10.8 56.8 19.4 58.3 28.6C50.4 31 40 30.8 32.4 28.2Z" fill="url(#dome)"/><path d="M32.4 28.2C33.2 19.4 38.4 10.4 44.2 9.2C50.2 10.8 56.8 19.4 58.3 28.6C50.4 31 40 30.8 32.4 28.2Z" fill="url(#domev)"/>
<rect x="42.4" y="14" width="1.5" height="1.6" fill="#3a3a44" opacity=".8"/><rect x="44.9" y="14" width="1.5" height="1.6" fill="#3a3a44" opacity=".8"/>
<rect x="41.8" y="17" width="5.2" height="1" fill="#5a6068" opacity=".7"/>
<rect x="40" y="21.6" width="9" height="0.9" fill="#a8c4dc" opacity=".6"/>
</svg><div class="lb">11 (VRayMtl)</div></div>
<div class="th" style="left:202.8px;top:326.5px"><svg viewBox="0 0 89.6 83" preserveAspectRatio="none">
<defs>
<radialGradient id="b11s" cx="0.38" cy="0.32" r="0.74" fx="0.32" fy="0.22"><stop offset="0" stop-color="#fcfaf4"/><stop offset="0.5" stop-color="#eee8dc"/><stop offset="0.88" stop-color="#ccc2b2"/><stop offset="1" stop-color="#a0968a"/></radialGradient>
<linearGradient id="b11h" x1="0" y1="0" x2="1" y2="0"><stop offset="0" stop-color="#ccc2b2"/><stop offset="0.28" stop-color="#fcfaf4"/><stop offset="0.6" stop-color="#eee8dc"/><stop offset="1" stop-color="#a0968a"/></linearGradient>
<linearGradient id="b11h2" x1="0" y1="0" x2="1" y2="0"><stop offset="0" stop-color="#eee8dc"/><stop offset="0.35" stop-color="#fcfaf4"/><stop offset="0.7" stop-color="#eee8dc"/><stop offset="1" stop-color="#ccc2b2"/></linearGradient>
<linearGradient id="b11v" x1="0" y1="0" x2="0" y2="1"><stop offset="0" stop-color="#a0968a" stop-opacity=".0"/><stop offset="1" stop-color="#a0968a" stop-opacity=".6"/></linearGradient>
<linearGradient id="b11sp" x1="0" y1="0" x2="0" y2="1"><stop offset="0" stop-color="#fcfaf4"/><stop offset="0.5" stop-color="#eee8dc"/><stop offset="1" stop-color="#a0968a"/></linearGradient>
<clipPath id="b11c"><circle cx="44.5" cy="27.9" r="27"/></clipPath>
</defs>
<use href="#bgfloor"/>
<!-- outer base -->
<path d="M12.8 62.5A32 9.5 0 0 1 76.8 62.5L72.6 70.6A27.8 8.4 0 0 1 17 70.6Z" fill="url(#b11h)"/>
<path d="M12.8 62.5A32 9.5 0 0 1 76.8 62.5L72.6 70.6A27.8 8.4 0 0 1 17 70.6Z" fill="url(#b11v)"/>
<ellipse cx="44.8" cy="62.5" rx="32" ry="9.5" fill="url(#b11h2)"/>
<ellipse cx="44.7" cy="60.6" rx="23.8" ry="9" fill="#a0968a" opacity=".75"/>
<!-- spikes -->
<path d="M2.6 50.4C9 52.8 16 55.8 23.5 59.6L21 64C14.6 59.6 8.4 55 2.6 50.4Z" fill="url(#b11sp)"/>
<path d="M2.6 50.4C9 52.8 16 55.8 23.5 59.6L21 64C14.6 59.6 8.4 55 2.6 50.4Z" fill="#a0968a" opacity=".3"/>
<path d="M84 51.4C78 53.2 72 55.8 65.5 59.4L69 63.8C74.6 59.6 79.6 55.4 84 51.4Z" fill="url(#b11h2)"/>
<path d="M84 51.4C79.6 55.4 74.6 59.6 69 63.8L67.4 61.8C73 58.2 79 54.8 84 51.4Z" fill="#a0968a" opacity=".3"/>
<!-- inner dome -->
<ellipse cx="44.6" cy="59" rx="21.9" ry="8.7" fill="url(#b11h)"/>
<ellipse cx="44.6" cy="57.4" rx="19" ry="6.6" fill="url(#b11h2)" opacity=".8"/>
<!-- neck -->
<path d="M22 40C25 47 30 50 30.2 53.4C32 57.8 58 57.8 59.8 53.4C60 50 65 47 68 40Z" fill="url(#b11h)"/>
<path d="M22 40C25 47 30 50 30.2 53.4C32 57.8 58 57.8 59.8 53.4C60 50 65 47 68 40Z" fill="#a0968a" opacity=".4"/>
<!-- sphere -->
<circle cx="44.5" cy="27.9" r="27" fill="url(#b11s)"/>
<g clip-path="url(#b11c)">
<rect x="15" y="0" width="60" height="58" fill="#000" filter="url(#wood)" opacity="0.05"/>
<path d="M17 31C30 43 60 43 72 32L72 60L17 60Z" fill="#a0968a" opacity=".3"/>
<ellipse cx="42" cy="52" rx="15" ry="4.5" fill="#fcfaf4" opacity=".3"/>
<ellipse cx="30" cy="14" rx="9" ry="6" fill="#fff" opacity="0.17" transform="rotate(-38 30 14)"/>
<path d="M24 8C20 14 18.6 22 19.6 30" stroke="#fff" stroke-width="2.2" fill="none" opacity="0.00" stroke-linecap="round"/>
<!-- band -->
<path d="M17.2 30.6C28 40.6 61 41.2 71.8 32.4" stroke="#a0968a" stroke-width="3.4" fill="none" opacity=".35"/>
<path d="M17.2 30.8C28 39.8 61 40.4 71.8 32.6" stroke="#dfe6ea" stroke-width="1.4" fill="none"/>
<!-- cutout -->
<path d="M44.8 2.6C37 7 29.6 17 27.6 29.4C38 33.4 52 33.6 62.4 29.8C61 18 52 7 44.8 2.6Z" fill="#ccc2b2"/>
<path d="M44.8 2.6C37 7 29.6 17 27.6 29.4L33 30.4C34 20 39 11 44.8 7.6Z" fill="#a0968a" opacity=".8"/>
<path d="M44.8 2.6C52 7 61 18 62.4 29.8L59.4 30.4C58 20 51.6 11 44.8 7.6Z" fill="#fcfaf4" opacity=".6"/>
</g>
<path d="M32.4 28.2C33.2 19.4 38.4 10.4 44.2 9.2C50.2 10.8 56.8 19.4 58.3 28.6C50.4 31 40 30.8 32.4 28.2Z" fill="url(#dome)"/><path d="M32.4 28.2C33.2 19.4 38.4 10.4 44.2 9.2C50.2 10.8 56.8 19.4 58.3 28.6C50.4 31 40 30.8 32.4 28.2Z" fill="url(#domev)"/>
<rect x="42.4" y="14" width="1.5" height="1.6" fill="#3a3a44" opacity=".8"/><rect x="44.9" y="14" width="1.5" height="1.6" fill="#3a3a44" opacity=".8"/>
<rect x="41.8" y="17" width="5.2" height="1" fill="#5a6068" opacity=".7"/>
<rect x="40" y="21.6" width="9" height="0.9" fill="#a8c4dc" opacity=".6"/>
</svg><div class="lb">12 (VRayMtl)</div></div>
  <div id="tsb"><i class="up"></i><b></b><i class="dn"></i></div>
 </div>
 <div id="split2"><i></i></div>
 <div id="right">
  <div id="ham"><i></i><i></i><i></i><i></i></div>
  <span class="dd3"></span>
 </div>
 <div id="info" class="bar"><span>信息</span></div>
 <div id="sett" class="bar"><span>设置</span></div>
 <div class="grip" style="left:170.9px"></div>
 <div class="grip" style="left:506.9px;height:52px;border-color:#4c4c4c"></div>
 <div id="smudge"></div>
 <div id="rband"></div>
 <div id="rstrip"></div>
 <div id="mosaic">
  <div id="halo"></div>
  <span id="www">www.</span>
  <i style="left:640px;top:490px;background:#5c5c5c"></i><i style="left:650px;top:490px;background:#676767"></i><i style="left:660px;top:490px;background:#5a5a5a"></i><i style="left:670px;top:490px;background:#5e5e5e"></i><i style="left:680px;top:490px;background:#606060"></i><i style="left:690px;top:490px;background:#5c5c5c"></i><i style="left:700px;top:490px;background:#565656"></i><i style="left:710px;top:490px;background:#424242"></i><i style="left:640px;top:500px;background:#6a6a6a"></i><i style="left:650px;top:500px;background:#7a7a7a"></i><i style="left:660px;top:500px;background:#666666"></i><i style="left:670px;top:500px;background:#707070"></i><i style="left:680px;top:500px;background:#747474"></i><i style="left:690px;top:500px;background:#686868"></i><i style="left:700px;top:500px;background:#5e5e5e"></i><i style="left:710px;top:500px;background:#444444"></i><i style="left:640px;top:510px;background:#5e5e5e"></i><i style="left:650px;top:510px;background:#5a5a5a"></i><i style="left:660px;top:510px;background:#505050"></i><i style="left:670px;top:510px;background:#808080"></i><i style="left:680px;top:510px;background:#787878"></i><i style="left:690px;top:510px;background:#7c7c74"></i><i style="left:700px;top:510px;background:#6c6c6c"></i><i style="left:710px;top:510px;background:#42423e"></i>
 </div>
</div>
</body></html>
